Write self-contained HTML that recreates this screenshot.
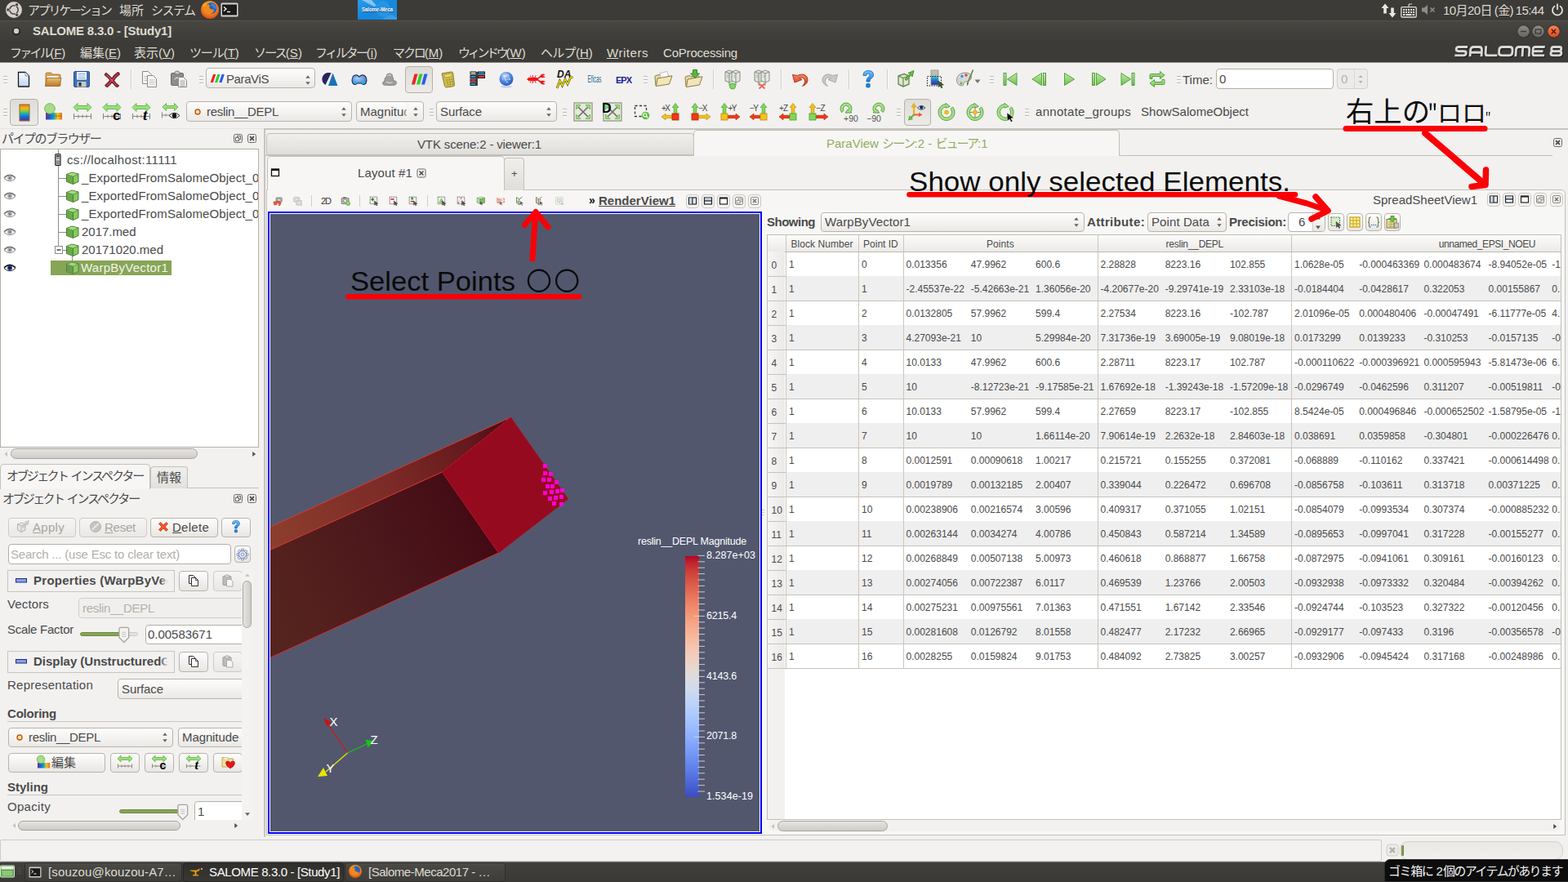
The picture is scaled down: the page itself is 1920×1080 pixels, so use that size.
<!DOCTYPE html>
<html lang="ja"><head><meta charset="utf-8"><title>SALOME 8.3.0 - [Study1]</title>
<style>
html,body{margin:0;padding:0;background:#f2f1f0;}
body{width:1920px;height:1080px;overflow:hidden;font-family:"Liberation Sans","Noto Sans CJK JP",sans-serif;}
#root{position:relative;width:1920px;height:1080px;overflow:hidden;background:#f2f1f0;}
#root div,#root span.t,#root svg.a{position:absolute;box-sizing:border-box;}
span.t{white-space:nowrap;}
span.t svg{display:inline-block;}
.btn{border:1px solid #b9b4ab;border-radius:4px;background:linear-gradient(#fdfdfc,#e8e6e3);}
.btnd{border:1px solid #cfcbc4;border-radius:4px;background:linear-gradient(#f6f5f4,#eae8e6);}
.combo{border:1px solid #b9b4ab;border-radius:4px;background:linear-gradient(#fdfdfc,#ebe9e6);}
.field{border:1px solid #b4afa6;border-radius:4px;background:#fff;}
.sbt{background:#f2f1f0;border-radius:7px;}
.sbh{border:1px solid #aaa59c;border-radius:7px;background:linear-gradient(#e6e4e1,#cfccc7);}
u{text-decoration:underline;text-underline-offset:1px;}

</style></head><body>
<div id="root">
<div style="left:0px;top:0px;width:1920px;height:25px;background:#3c3b37"></div>
<div style="left:0px;top:25px;width:1920px;height:1px;background:#54534e"></div>
<svg class="a" style="left:6.0px;top:1.0px" width="22" height="22" viewBox="0 0 22 22"><circle cx="11" cy="11" r="10" fill="#d6d2c9"/><circle cx="11" cy="11" r="5.2" fill="none" stroke="#4a4944" stroke-width="1.6"/><circle cx="3.8" cy="11" r="1.7" fill="#4a4944"/><circle cx="14.6" cy="4.8" r="1.7" fill="#4a4944"/><circle cx="14.6" cy="17.2" r="1.7" fill="#4a4944"/><path d="M11 11 L5.5 11 M11 11 L13.8 6.2 M11 11 L13.8 15.8" stroke="#d6d2c9" stroke-width="1.4"/></svg>
<span class="t" style="left:34px;top:2.5px;font-size:15px;line-height:20px;color:#dfdbd2;"><span style="letter-spacing:-2.29px">アプリケーション</span></span>
<span class="t" style="left:146px;top:2.5px;font-size:15px;line-height:20px;color:#dfdbd2;">場所</span>
<span class="t" style="left:185px;top:2.5px;font-size:15px;line-height:20px;color:#dfdbd2;"><span style="letter-spacing:-1.55px">システム</span></span>
<svg class="a" style="left:245.0px;top:0.0px" width="24" height="24" viewBox="0 0 24 24"><defs><radialGradient id="ffg" cx=".5" cy=".35" r=".7"><stop offset="0" stop-color="#ffd43a"/><stop offset=".5" stop-color="#f58a1c"/><stop offset="1" stop-color="#d9421c"/></radialGradient></defs><circle cx="12" cy="12" r="11" fill="url(#ffg)"/><circle cx="13.5" cy="10" r="7" fill="#2b62b8"/><path d="M7 6c2-1 4-1 5 1c-1 1-1 3 1 4c2 1 3 0 4 1c0 3-3 5-6 5c-4 0-7-3-6-7z" fill="#f08a1d"/><path d="M14 4c3 0 6 3 6 7l-3-1c-1-2-2-3-4-3z" fill="#3f86dc"/><path d="M3 8c0-2 2-5 4-5c-1 1-1 3 0 4z" fill="#f6a724"/></svg>
<svg class="a" style="left:270.0px;top:3.0px" width="22" height="18" viewBox="0 0 22 18"><rect x="0.5" y="0.5" width="21" height="17" rx="1.5" fill="#d8d6d0"/><rect x="2" y="2.5" width="18" height="13" fill="#1b1b1b"/><path d="M4 5.5l3 2.5l-3 2.5" stroke="#fff" stroke-width="1.3" fill="none"/><path d="M8 11.5h4" stroke="#fff" stroke-width="1.3"/></svg>
<svg class="a" style="left:438.0px;top:0.0px" width="48" height="24" viewBox="0 0 48 24"><defs><linearGradient id="smt" x1="0" y1="0" x2="1" y2="1"><stop offset="0" stop-color="#2a9be8"/><stop offset=".5" stop-color="#1487dc"/><stop offset="1" stop-color="#1b90e2"/></linearGradient></defs><rect width="48" height="24" fill="url(#smt)"/><path d="M5 0h12l6 7l-3 1z" fill="#a8d6f6" opacity=".75"/><ellipse cx="31" cy="11" rx="9" ry="10" fill="#3d9fe6" opacity=".45"/><path d="M30 24q6-6 12-6l6 4v2z" fill="#4fb0ee" opacity=".5"/><text x="24" y="14" font-family="Liberation Sans,sans-serif" font-size="6.500" font-weight="bold" text-anchor="middle" textLength="38" lengthAdjust="spacingAndGlyphs" fill="#20304a" opacity=".8" transform="translate(.5,.5)">Salome-Meca</text><text x="24" y="14" font-family="Liberation Sans,sans-serif" font-size="6.500" font-weight="bold" text-anchor="middle" textLength="38" lengthAdjust="spacingAndGlyphs" fill="#fff">Salome-Meca</text></svg>
<svg class="a" style="left:1691.0px;top:3.5px" width="20" height="18" viewBox="0 0 20 18"><path d="M5 0.5L9.5 6H6.8v6.5H3.2V6H0.5z" fill="#ebe7de"/><path d="M14 17.5L9.5 12h2.7V5.5h3.6V12h2.7z" fill="#ebe7de"/></svg>
<svg class="a" style="left:1715.0px;top:2.5px" width="20" height="19" viewBox="0 0 20 19"><path d="M10 5V3.2c0-1 .5-1.2 1.5-1.2H14" stroke="#e2ded5" stroke-width="1.1" fill="none"/><rect x="0.8" y="5.6" width="18.4" height="12.4" rx="1.2" fill="none" stroke="#e2ded5" stroke-width="1.3"/><g fill="#e2ded5"><rect x="3" y="8" width="2" height="2"/><rect x="6" y="8" width="2" height="2"/><rect x="9" y="8" width="2" height="2"/><rect x="12" y="8" width="2" height="2"/><rect x="15" y="8" width="2" height="2"/><rect x="3" y="11" width="2" height="2"/><rect x="6" y="11" width="2" height="2"/><rect x="9" y="11" width="2" height="2"/><rect x="12" y="11" width="2" height="2"/><rect x="15" y="11" width="2" height="2"/><rect x="3" y="14" width="2.5" height="2"/><rect x="6.5" y="14" width="7" height="2"/><rect x="14.5" y="14" width="2.5" height="2"/></g></svg>
<svg class="a" style="left:1740.0px;top:4.0px" width="20" height="16" viewBox="0 0 20 16"><path d="M1 5.5h3L8 2v12L4 10.5H1z" fill="#8e8c86"/><path d="M11.5 5.5l5 5M16.5 5.5l-5 5" stroke="#8e8c86" stroke-width="1.6"/></svg>
<span class="t" style="left:1767px;top:2.5px;font-size:15px;line-height:20px;color:#dfdbd2;letter-spacing:-0.55px;word-spacing:-1px">10月20日 (金) 15:44</span>
<svg class="a" style="left:1899.0px;top:4.0px" width="16" height="16" viewBox="0 0 16 16"><path d="M4.6 3.6A6 6 0 1 0 11.4 3.6" fill="none" stroke="#ebe7de" stroke-width="1.7" stroke-linecap="round"/><path d="M8 1v6.2" stroke="#ebe7de" stroke-width="1.7" stroke-linecap="round"/></svg>
<div style="left:0px;top:26px;width:1920px;height:26px;background:linear-gradient(#474641,#3c3b37)"></div>
<svg class="a" style="left:14.0px;top:32.0px" width="12" height="12" viewBox="0 0 12 12"><circle cx="6" cy="6.4" r="5" fill="#2b2a27"/><circle cx="6" cy="6" r="3.2" fill="#cfccc5"/></svg>
<span class="t" style="left:40px;top:28.0px;font-size:15px;line-height:20px;color:#dfdbd2;font-weight:bold;letter-spacing:-0.218px;">SALOME 8.3.0 - [Study1]</span>
<svg class="a" style="left:1856.5px;top:29.5px" width="17" height="17" viewBox="0 0 17 17"><defs><linearGradient id="wbg" x1="0" y1="0" x2="0" y2="1"><stop offset="0" stop-color="#8d8b83"/><stop offset="1" stop-color="#66645e"/></linearGradient><linearGradient id="wbc" x1="0" y1="0" x2="0" y2="1"><stop offset="0" stop-color="#f58457"/><stop offset="1" stop-color="#dd4a1c"/></linearGradient></defs><circle cx="8.5" cy="8.5" r="8" fill="#2e2d2a"/><circle cx="8.5" cy="8.5" r="7.2" fill="url(#wbg)"/><path d="M5 8.5h7" stroke="#3b3a36" stroke-width="1.4"/></svg>
<svg class="a" style="left:1874.5px;top:29.5px" width="17" height="17" viewBox="0 0 17 17"><circle cx="8.5" cy="8.5" r="8" fill="#2e2d2a"/><circle cx="8.5" cy="8.5" r="7.2" fill="url(#wbg)"/><rect x="5.2" y="6" width="6.6" height="5" fill="none" stroke="#3b3a36" stroke-width="1.3"/></svg>
<svg class="a" style="left:1893.5px;top:29.5px" width="17" height="17" viewBox="0 0 17 17"><circle cx="8.5" cy="8.5" r="8" fill="#2e2d2a"/><circle cx="8.5" cy="8.5" r="7.2" fill="url(#wbc)"/><path d="M5.8 5.8l5.4 5.4M11.2 5.8l-5.4 5.4" stroke="#4a1a0a" stroke-width="1.4"/></svg>
<div style="left:0px;top:52px;width:1920px;height:24px;background:#3c3b37"></div>
<span class="t" style="left:12px;top:55.0px;font-size:15px;line-height:20px;color:#dfdbd2;"><span style="letter-spacing:-2.72px">ファイル</span>(<u>F</u>)</span>
<span class="t" style="left:98px;top:55.0px;font-size:15px;line-height:20px;color:#dfdbd2;">編集(<u>E</u>)</span>
<span class="t" style="left:164px;top:55.0px;font-size:15px;line-height:20px;color:#dfdbd2;">表示(<u>V</u>)</span>
<span class="t" style="left:232px;top:55.0px;font-size:15px;line-height:20px;color:#dfdbd2;"><span style="letter-spacing:-1.13px">ツール</span>(<u>T</u>)</span>
<span class="t" style="left:311px;top:55.0px;font-size:15px;line-height:20px;color:#dfdbd2;"><span style="letter-spacing:-1.8px">ソース</span>(<u>S</u>)</span>
<span class="t" style="left:386px;top:55.0px;font-size:15px;line-height:20px;color:#dfdbd2;"><span style="letter-spacing:-2.4px">フィルター</span>(<u>i</u>)</span>
<span class="t" style="left:481px;top:55.0px;font-size:15px;line-height:20px;color:#dfdbd2;"><span style="letter-spacing:-2.1px">マクロ</span>(<u>M</u>)</span>
<span class="t" style="left:561px;top:55.0px;font-size:15px;line-height:20px;color:#dfdbd2;"><span style="letter-spacing:-3.3px">ウィンドウ</span>(<u>W</u>)</span>
<span class="t" style="left:662px;top:55.0px;font-size:15px;line-height:20px;color:#dfdbd2;"><span style="letter-spacing:-0.7px">ヘルプ</span>(<u>H</u>)</span>
<span class="t" style="left:743px;top:54.5px;font-size:15px;line-height:20px;color:#dfdbd2;letter-spacing:0.540px;"><u>W</u>riters</span>
<span class="t" style="left:812px;top:54.5px;font-size:15px;line-height:20px;color:#dfdbd2;letter-spacing:-0.198px;">CoProcessing</span>
<svg class="a" style="left:1776.5px;top:54.0px" width="140" height="18" viewBox="0 0 140 18"><g fill="none" stroke="#1e1d1b" stroke-width="2.9" stroke-linejoin="round" stroke-linecap="butt" transform="translate(5.2,3.4) scale(.962,1) skewX(-4)">
<path d="M16.5 1.3H5.5Q2.3 1.3 2.3 3.9Q2.3 6.5 5.5 6.5H12Q15.2 6.5 15.2 9.1Q15.2 11.7 12 11.7H1"/>
<path d="M20.5 13V5.5Q20.5 1.3 24.5 1.3H31Q35 1.3 35 5.5V13M20.5 8H35"/>
<path d="M40 0V9Q40 11.7 43 11.7H55"/>
<path d="M61 1.3H70Q74 1.3 74 5V8Q74 11.7 70 11.7H61Q57 11.7 57 8V5Q57 1.3 61 1.3Z"/>
<path d="M78.5 13V5Q78.5 1.3 82 1.3H92Q95.5 1.3 95.5 5V13M87 1.3V13"/>
<path d="M115 1.3H103Q100 1.3 100 4V9Q100 11.7 103 11.7H115M100 6.5H113"/>
<path d="M126 1.3H133.5Q136 1.3 136 3.9Q136 6.5 133.5 6.5H126Q123.5 6.5 123.5 3.9Q123.5 1.3 126 1.3ZM126 6.5Q123 6.5 123 9.1Q123 11.7 126 11.7H133.5Q136.5 11.7 136.5 9.1Q136.5 6.5 133.5 6.5"/>
</g><g fill="none" stroke="#d9d9d9" stroke-width="2.9" stroke-linejoin="round" stroke-linecap="butt" transform="translate(4.2,2.2) scale(.962,1) skewX(-4)">
<path d="M16.5 1.3H5.5Q2.3 1.3 2.3 3.9Q2.3 6.5 5.5 6.5H12Q15.2 6.5 15.2 9.1Q15.2 11.7 12 11.7H1"/>
<path d="M20.5 13V5.5Q20.5 1.3 24.5 1.3H31Q35 1.3 35 5.5V13M20.5 8H35"/>
<path d="M40 0V9Q40 11.7 43 11.7H55"/>
<path d="M61 1.3H70Q74 1.3 74 5V8Q74 11.7 70 11.7H61Q57 11.7 57 8V5Q57 1.3 61 1.3Z"/>
<path d="M78.5 13V5Q78.5 1.3 82 1.3H92Q95.5 1.3 95.5 5V13M87 1.3V13"/>
<path d="M115 1.3H103Q100 1.3 100 4V9Q100 11.7 103 11.7H115M100 6.5H113"/>
<path d="M126 1.3H133.5Q136 1.3 136 3.9Q136 6.5 133.5 6.5H126Q123.5 6.5 123.5 3.9Q123.5 1.3 126 1.3ZM126 6.5Q123 6.5 123 9.1Q123 11.7 126 11.7H133.5Q136.5 11.7 136.5 9.1Q136.5 6.5 133.5 6.5"/>
</g></svg>
<div style="left:0px;top:76px;width:1920px;height:1px;background:#8d8c88"></div>
<div style="left:4px;top:93px;width:5px;height:1px;background:#bdb9b2"></div>
<div style="left:4px;top:94px;width:5px;height:1px;background:#fbfbfa"></div>
<div style="left:4px;top:97px;width:5px;height:1px;background:#bdb9b2"></div>
<div style="left:4px;top:98px;width:5px;height:1px;background:#fbfbfa"></div>
<div style="left:4px;top:101px;width:5px;height:1px;background:#bdb9b2"></div>
<div style="left:4px;top:102px;width:5px;height:1px;background:#fbfbfa"></div>
<svg class="a" style="left:17.0px;top:85.0px" width="24" height="24" viewBox="0 0 24 24"><defs><linearGradient id="ndg" x1="0" y1="0" x2="0" y2="1"><stop offset="0" stop-color="#fff"/><stop offset="1" stop-color="#b9d3f6"/></linearGradient></defs><path d="M5.5 3.5h8.5l4.5 4.5v13h-13z" fill="url(#ndg)" stroke="#1a1a1a" stroke-width="1.3" stroke-linejoin="round"/><path d="M14 3.5v4.5h4.5" fill="#dfeafc" stroke="#6f86b5" stroke-width=".8"/></svg>
<svg class="a" style="left:53.0px;top:85.0px" width="24" height="24" viewBox="0 0 24 24"><defs><linearGradient id="fog" x1="0" y1="0" x2="0" y2="1"><stop offset="0" stop-color="#e9bd72"/><stop offset="1" stop-color="#b87a2a"/></linearGradient></defs><path d="M3 20V5.5q0-1.500 1.500-1.500h5l1.500 2h8.500q1.500 0 1.500 1.500V20z" fill="#d9a255" stroke="#a36a22" stroke-width=".8"/><path d="M4.500 8h14v11h-14z" fill="#f6f1e6"/><path d="M2.500 20.500l2-10h17.500l-2.300 10z" fill="url(#fog)" stroke="#a0661d" stroke-width=".8"/></svg>
<svg class="a" style="left:88.0px;top:85.0px" width="24" height="24" viewBox="0 0 24 24"><rect x="2.500" y="2.500" width="19" height="19" rx="1.500" fill="#3f6fb6" stroke="#2b4f88" stroke-width="1"/><rect x="6" y="3" width="12" height="9.500" fill="#fff"/><path d="M7.500 5.500h9M7.500 8h9M7.500 10.500h9" stroke="#6f9be0" stroke-width="1"/><rect x="6.500" y="15" width="11" height="6.500" fill="#c9c9c4"/><rect x="8.500" y="16" width="3" height="4.500" fill="#2a2a2a"/></svg>
<svg class="a" style="left:125.0px;top:85.0px" width="24" height="24" viewBox="0 0 24 24"><path d="M5 4.5C8 7 10.5 9.5 12 11.2C14 8 16.5 5.5 19.5 3.5C20.8 4.2 21.3 5 21.3 6C18.5 8 16 10.8 14.3 13.5C16 16 18 18.3 20.5 20C19.8 21 18.8 21.5 17.5 21.3C15.3 19.3 13.6 17.3 12.2 15.500C10.600 17.800 8.800 19.800 6.500 21.500C5.300 21.300 4.300 20.600 3.800 19.500C6.300 17.600 8.200 15.500 9.900 13.200C8.300 11 6.200 8.800 3.300 6.800C3.500 5.700 4 4.900 5 4.500Z" fill="#c23a4f" stroke="#5e1422" stroke-width="1.1" stroke-linejoin="round"/><path d="M5.500 6.500C8.500 9 11 12 12.500 14" stroke="#e08090" stroke-width="1" fill="none" opacity=".7"/></svg>
<div style="left:160px;top:85.0px;width:1px;height:24px;background:#d0cdc7"></div>
<div style="left:161px;top:85.0px;width:1px;height:24px;background:#fbfbfa"></div>
<svg class="a" style="left:171.0px;top:85.0px" width="24" height="24" viewBox="0 0 24 24"><path d="M3.500 2.500h7l4 4v11h-11z" fill="#f6f6f4" stroke="#8a8a86" stroke-width="1"/><path d="M5.500 8.500h7M5.500 11h7M5.500 13.500h7" stroke="#b4b4b0" stroke-width=".8"/><path d="M9.500 7.500h7l4 4v10h-11z" fill="#f6f6f4" stroke="#8a8a86" stroke-width="1"/><path d="M11.500 13h7M11.500 15.500h7M11.500 18h7" stroke="#b4b4b0" stroke-width=".8"/></svg>
<svg class="a" style="left:207.0px;top:85.0px" width="24" height="24" viewBox="0 0 24 24"><rect x="2.500" y="4.500" width="15" height="15" rx="1.500" fill="#8d8d89" stroke="#6a6a66"/><path d="M7 4.500q0-2.500 3-2.500t3 2.500v1.500h-6z" fill="#c9c9c5" stroke="#6a6a66" stroke-width=".8"/><path d="M6 12q3-5 7-2l1-1.500l1 5l-5-.5l1.500-1.300q-2.500-1.300-4.500 1.500z" fill="#d5d5d1" stroke="#777" stroke-width=".5"/><path d="M11.500 9.500h6l4 4v8h-10z" fill="#f4f4f2" stroke="#8a8a86" stroke-width="1"/><path d="M13.500 14h6M13.500 16h6M13.500 18h6M13.500 20h6" stroke="#9a9a96" stroke-width=".9"/></svg>
<div style="left:244px;top:93px;width:5px;height:1px;background:#bdb9b2"></div>
<div style="left:244px;top:94px;width:5px;height:1px;background:#fbfbfa"></div>
<div style="left:244px;top:97px;width:5px;height:1px;background:#bdb9b2"></div>
<div style="left:244px;top:98px;width:5px;height:1px;background:#fbfbfa"></div>
<div style="left:244px;top:101px;width:5px;height:1px;background:#bdb9b2"></div>
<div style="left:244px;top:102px;width:5px;height:1px;background:#fbfbfa"></div>
<div class="combo" style="left:252px;top:83px;width:134px;height:25px;"></div>
<svg class="a" style="left:257.0px;top:89.5px" width="18" height="12" viewBox="0 0 18 12"><path d="M4 1h3.300L4 11H.7z" fill="#ee2222"/><path d="M9.3 1h3.300L9.300 11H6z" fill="#2fcf2a"/><path d="M14.600 1h3.300L14.600 11h-3.300z" fill="#2a5cf0"/></svg>
<span class="t" style="left:277px;top:86.5px;font-size:15px;line-height:20px;color:#4a4a4a;letter-spacing:-0.394px;">ParaViS</span>
<svg class="a" style="left:371.5px;top:89.5px" width="10" height="16" viewBox="0 0 10 16"><path d="M5 2.200L7.700 5.800H2.300z" fill="#67655f"/><path d="M5 13.800L7.700 10.200H2.300z" fill="#67655f"/></svg>
<svg class="a" style="left:392.0px;top:85.0px" width="24" height="24" viewBox="0 0 24 24"><path d="M11 4A8 8 0 0 0 6.500 19L13.500 4.300Q12.300 4 11 4z" fill="#27235e"/><path d="M15.500 4.500L21.500 20H10z" fill="#1d71b8"/></svg>
<svg class="a" style="left:428.0px;top:85.0px" width="24" height="24" viewBox="0 0 24 24"><defs><radialGradient id="geg" cx=".4" cy=".35" r=".7"><stop offset="0" stop-color="#a8d0ff"/><stop offset="1" stop-color="#3f78c9"/></radialGradient></defs><path d="M4.500 8.500q3.500-3.500 7.500.5q4-4 7.500-.5q2.500 4 .5 8.500q-3 3-5.500 0h-5q-2.500 3-5.500 0q-2-4.500.5-8.500z" fill="url(#geg)" stroke="#1d2f4a" stroke-width="1.1"/><ellipse cx="7" cy="16" rx="2.200" ry="1.800" fill="#2fb3e8"/><ellipse cx="17" cy="16" rx="2.200" ry="1.800" fill="#2fb3e8"/></svg>
<svg class="a" style="left:465.0px;top:85.0px" width="24" height="24" viewBox="0 0 24 24"><path d="M7 14q-3.500.5-3.500 3t5 2.500h7q5 0 5-3t-4-3q1-3-1-4.500q.5-4-3.500-4t-4 4q-2.500 1-2 5z" fill="#9e9e9c" stroke="#7b7b79" stroke-width=".8"/><path d="M9 8q2-2.500 5-.5M7.500 15q3 2 8 1" stroke="#d8d8d6" stroke-width="1.200" fill="none"/></svg>
<div style="left:496px;top:81px;width:34px;height:33px;border:1px solid #b6b1a8;border-radius:4px;background:linear-gradient(#dedcd8,#ecebe8)"></div>
<svg class="a" style="left:501.0px;top:85.0px" width="24" height="24" viewBox="0 0 24 24"><path d="M6.500 5.500h4L7 18.500H3z" fill="#ee2222"/><path d="M12.500 5.500h4L13 18.500H9z" fill="#2fcf2a"/><path d="M18.500 5.500h4L19 18.500h-4z" fill="#2a5cf0"/></svg>
<svg class="a" style="left:537.0px;top:85.0px" width="24" height="24" viewBox="0 0 24 24"><path d="M4 5l11.500-2q2-.3 2.200 1.700l1.800 14q.2 1.800-1.500 2l-8 1.300q-1.800.3-2.500-1.500z" fill="#cdbb4e" stroke="#8e7f24" stroke-width="1"/><path d="M6.500 6.500l9.500-1.600l.6 3.600l-8.600 1.600z" fill="#e6d97c" stroke="#9a8a2c" stroke-width=".6"/><g fill="#a5952f"><circle cx="10.500" cy="13" r="1"/><circle cx="13.500" cy="12.500" r="1"/><circle cx="16.500" cy="12" r="1"/><circle cx="11" cy="16" r="1"/><circle cx="14" cy="15.500" r="1"/><circle cx="17" cy="15" r="1"/><circle cx="11.500" cy="19" r="1"/><circle cx="14.500" cy="18.500" r="1"/><circle cx="17.500" cy="18" r="1"/></g></svg>
<svg class="a" style="left:573.0px;top:85.0px" width="24" height="24" viewBox="0 0 24 24"><g stroke="#1c1c1c" stroke-width="1"><rect x="3" y="3" width="7" height="3" fill="#d9d9d9"/><rect x="12.500" y="3" width="8" height="3" fill="#2f8fe0"/><rect x="3" y="7.500" width="7" height="3" fill="#2f8fe0"/><rect x="12.500" y="7.500" width="8" height="3" fill="#e8333c"/><rect x="3" y="12" width="7" height="3" fill="#e8333c"/><rect x="3" y="16.500" width="7" height="3" fill="#2f8fe0"/></g><path d="M11 3v17" stroke="#1c1c1c" stroke-width="1.600"/></svg>
<svg class="a" style="left:608.0px;top:85.0px" width="24" height="24" viewBox="0 0 24 24"><defs><radialGradient id="glg" cx=".4" cy=".3" r=".75"><stop offset="0" stop-color="#cfe3ff"/><stop offset=".45" stop-color="#5b93e6"/><stop offset="1" stop-color="#1f4fb5"/></radialGradient></defs><ellipse cx="12" cy="21" rx="7" ry="1.800" fill="#b9cdee" opacity=".8"/><circle cx="12" cy="11.500" r="8.500" fill="url(#glg)"/><g fill="#fff" opacity=".9"><circle cx="9" cy="8" r=".8"/><circle cx="14" cy="7" r=".7"/><circle cx="16" cy="12" r=".8"/><circle cx="11" cy="13" r=".7"/><circle cx="13" cy="16" r=".7"/><circle cx="7.500" cy="12" r=".6"/></g><path d="M9 8l5-1l2 5l-5 1zM11 13l2 3" stroke="#e8f0ff" stroke-width=".5" fill="none" opacity=".8"/></svg>
<svg class="a" style="left:644.0px;top:85.0px" width="26" height="24" viewBox="0 0 26 24"><g fill="#f01414"><ellipse cx="9" cy="12" rx="6.500" ry="2.600"/><path d="M1 12l3-2.500v5z"/><path d="M14 10.500q3-1.500 5-4.500q3-1 4.500.5q-2 .5-3 1.800q2-.3 3.500.7q-3 2-6 .8q-1.500 1-3 1.700z"/><path d="M14 13.500q3 1.500 5 4.500q3 1 4.500-.5q-2-.5-3-1.800q2 .3 3.500-.7q-3-2-6-.8q-1.500-1-3-1.700z"/><path d="M5 9.500l1-2M8 9.300l.5-2.300M11 9.500l1-2M5 14.500l1 2M8 14.700l.5 2.300M11 14.500l1 2" stroke="#f01414" stroke-width="1"/></g></svg>
<svg class="a" style="left:680.0px;top:84.0px" width="24" height="26" viewBox="0 0 24 26"><text x="2" y="11" font-family="Liberation Sans,sans-serif" font-size="12" font-weight="bold" font-style="italic" fill="#111">DA</text><path d="M2 24l3.500-9l3 6l3.500-8l3 6l4-9l2.500 1.500" fill="none" stroke="#3a3a10" stroke-width="2.600"/><path d="M2 24l3.500-9l3 6l3.500-8l3 6l4-9l2.500 1.500" fill="none" stroke="#f2e200" stroke-width="1.500"/></svg>
<svg class="a" style="left:718.0px;top:90.0px" width="20" height="14" viewBox="0 0 20 14"><text x="10" y="11" font-family="Liberation Sans,sans-serif" font-size="10" text-anchor="middle" textLength="17" lengthAdjust="spacingAndGlyphs" fill="#1d6f96" transform="scale(1,1.200) translate(0,-1.800)">Eficas</text></svg>
<svg class="a" style="left:752.0px;top:90.0px" width="24" height="14" viewBox="0 0 24 14"><text x="12" y="11.500" font-family="Liberation Sans,sans-serif" font-size="11" font-weight="bold" text-anchor="middle" textLength="20" fill="#1a1a9a">EPX</text></svg>
<div style="left:788px;top:93px;width:5px;height:1px;background:#bdb9b2"></div>
<div style="left:788px;top:94px;width:5px;height:1px;background:#fbfbfa"></div>
<div style="left:788px;top:97px;width:5px;height:1px;background:#bdb9b2"></div>
<div style="left:788px;top:98px;width:5px;height:1px;background:#fbfbfa"></div>
<div style="left:788px;top:101px;width:5px;height:1px;background:#bdb9b2"></div>
<div style="left:788px;top:102px;width:5px;height:1px;background:#fbfbfa"></div>
<svg class="a" style="left:800.0px;top:85.0px" width="26" height="24" viewBox="0 0 26 24"><path d="M3 20l-1-11q0-1.200 1.200-1.500l4.500-1l1.500 1.500l8-1.500q1.300-.2 1.500 1l.3 2.500" fill="#e8d9a8" stroke="#8a7a44" stroke-width="1"/><path d="M8 4.500l9-2l2 7l-10 2z" fill="#fbfbf8" stroke="#aaa" stroke-width=".7"/><path d="M3.500 20.500l1.500-9.500l18-3.200l-3.500 10.200z" fill="#f2e6b8" stroke="#8a7a44" stroke-width="1"/></svg>
<svg class="a" style="left:837.0px;top:84.0px" width="26" height="26" viewBox="0 0 26 26"><path d="M3 22l-1-11q0-1.200 1.200-1.500l4.500-1l1.500 1.500l8-1.500q1.300-.2 1.500 1l.3 2.500" fill="#e8d9a8" stroke="#8a7a44" stroke-width="1"/><path d="M3.500 22.500l1.500-9.500l18-3.200l-3.500 10.200z" fill="#f2e6b8" stroke="#8a7a44" stroke-width="1"/><path d="M11.500 1.500h5v4.500h3l-5.500 5.500l-5.500-5.500h3z" fill="#59b83c" stroke="#2f7a1c" stroke-width=".9"/></svg>
<div style="left:873px;top:85.0px;width:1px;height:24px;background:#d0cdc7"></div>
<div style="left:874px;top:85.0px;width:1px;height:24px;background:#fbfbfa"></div>
<svg class="a" style="left:885.0px;top:84.0px" width="24" height="26" viewBox="0 0 24 26"><g stroke="#7d8578" stroke-width=".9"><path d="M3 4l5-2l5 2v11l-5 2l-5-2z" fill="#dfe3da"/><path d="M3 4l5 2l5-2M8 6v11" fill="none"/><path d="M11 4l5-2l5 2v11l-5 2l-5-2z" fill="#e6e9e2"/><path d="M11 4l5 2l5-2M16 6v11" fill="none"/></g><path d="M5 8l2 .8M5 10l2 .8M13.500 8l2 .8M13.500 10l2 .8" stroke="#9aa394" stroke-width=".8"/><path d="M8 17v3h8v-3M12 20v1" stroke="#8a9284" stroke-width="1.200" fill="none"/><circle cx="12" cy="21.500" r="3.600" fill="#7ed957" stroke="#4e9a30" stroke-width=".8"/></svg>
<svg class="a" style="left:921.0px;top:84.0px" width="24" height="26" viewBox="0 0 24 26"><g stroke="#7d8578" stroke-width=".9"><path d="M3 4l5-2l5 2v11l-5 2l-5-2z" fill="#dfe3da"/><path d="M3 4l5 2l5-2M8 6v11" fill="none"/><path d="M11 4l5-2l5 2v11l-5 2l-5-2z" fill="#e6e9e2"/><path d="M11 4l5 2l5-2M16 6v11" fill="none"/></g><path d="M5 8l2 .8M5 10l2 .8M13.500 8l2 .8M13.500 10l2 .8" stroke="#9aa394" stroke-width=".8"/><path d="M8 17v3h8v-3M12 20v1" stroke="#8a9284" stroke-width="1.200" fill="none"/><path d="M8.500 18.500l7 6M15.500 18.500l-7 6" stroke="#e86a5a" stroke-width="2"/></svg>
<div style="left:956px;top:85.0px;width:1px;height:24px;background:#d0cdc7"></div>
<div style="left:957px;top:85.0px;width:1px;height:24px;background:#fbfbfa"></div>
<svg class="a" style="left:968.0px;top:85.0px" width="24" height="24" viewBox="0 0 24 24"><defs><linearGradient id="ung" x1="0" y1="0" x2="0" y2="1"><stop offset="0" stop-color="#f7875a"/><stop offset="1" stop-color="#d8361c"/></linearGradient></defs><path d="M2.500 6.500l2.500 9.500l9-3.500l-3.500-2q4-2 6.500 1.500q2 4-2.500 8.500q8.500-3.500 6-10.500q-3.500-6.500-12-2.500z" fill="url(#ung)" stroke="#a82a14" stroke-width=".9" stroke-linejoin="round"/></svg>
<svg class="a" style="left:1004.0px;top:85.0px" width="24" height="24" viewBox="0 0 24 24"><path d="M21.500 6.500l-2.500 9.500l-9-3.500l3.500-2q-4-2-6.500 1.500q-2 4 2.500 8.500q-8.500-3.500-6-10.500q3.500-6.500 12-2.500z" fill="#c9c9c7" stroke="#a3a3a0" stroke-width=".9" stroke-linejoin="round"/></svg>
<div style="left:1039px;top:85.0px;width:1px;height:24px;background:#d0cdc7"></div>
<div style="left:1040px;top:85.0px;width:1px;height:24px;background:#fbfbfa"></div>
<svg class="a" style="left:1051.0px;top:84.0px" width="24" height="26" viewBox="0 0 24 26"><defs><linearGradient id="hlg" x1="0" y1="0" x2="0" y2="1"><stop offset="0" stop-color="#7cc4ff"/><stop offset="1" stop-color="#0f7fe0"/></linearGradient></defs><path d="M6 8.500q0-6 6.200-6q6.300 0 6.300 5.300q0 3-3 4.700q-1.500 1-1.500 3v.5h-4v-1q0-3 2.500-4.700q1.500-1 1.500-2.500q0-1.800-2-1.800q-2.200 0-2.200 2.500z" fill="url(#hlg)" stroke="#0a5fb0" stroke-width=".8"/><rect x="9.800" y="18.500" width="4.400" height="4.400" rx=".8" fill="#1588e8" stroke="#0a5fb0" stroke-width=".8"/></svg>
<div style="left:1086px;top:85.0px;width:1px;height:24px;background:#d0cdc7"></div>
<div style="left:1087px;top:85.0px;width:1px;height:24px;background:#fbfbfa"></div>
<svg class="a" style="left:1096.0px;top:84.0px" width="26" height="26" viewBox="0 0 26 26"><path d="M4 9l7-2.500l6 2.500v10l-7 3l-6-3z" fill="#dfe6d6" stroke="#6c8c4c" stroke-width="1.400" stroke-linejoin="round"/><path d="M4 9l6 2.500l7-2.500M10 11.500v10.500" fill="none" stroke="#6c8c4c" stroke-width="1.200"/><path d="M12 13l7-7l-3-.5l7-3l-2 7.500l-1-2.500l-6 7z" fill="#6cc04a" stroke="#3f8a26" stroke-width=".9"/></svg>
<svg class="a" style="left:1132.0px;top:84.0px" width="26" height="26" viewBox="0 0 26 26"><defs><linearGradient id="scg" x1="0" y1="0" x2="0" y2="1"><stop offset="0" stop-color="#c9c3b5"/><stop offset=".35" stop-color="#bdb7a8"/><stop offset=".45" stop-color="#35c4c9"/><stop offset=".7" stop-color="#1d6fd0"/><stop offset="1" stop-color="#3a2aa0"/></linearGradient></defs><rect x="8" y="2" width="9" height="18" fill="url(#scg)" stroke="#888375" stroke-width=".7"/><rect x="3.500" y="9.500" width="17" height="11.500" fill="none" stroke="#222" stroke-width="1.200" stroke-dasharray="1.500 1.500"/><path d="M17 15l6.500 5l-3 .3l1.500 3l-1.300.6l-1.500-3l-2 1.800z" fill="#3d5a2a" stroke="#1d2f12" stroke-width=".5"/></svg>
<svg class="a" style="left:1169.0px;top:84.0px" width="26" height="26" viewBox="0 0 26 26"><path d="M12 5q-9 1-9.500 9q0 6 6 7q3 0 2.500-2.500q-.5-2.500 2.500-2.500q6-.5 7-5q.5-6-8.500-6z" fill="#d9d9d6" stroke="#8f8f8b" stroke-width="1"/><circle cx="9" cy="9.500" r="1.700" fill="#3a8fe0"/><circle cx="14" cy="8" r="1.700" fill="#e04040"/><circle cx="6.500" cy="14" r="1.700" fill="#e8e8e8" stroke="#999" stroke-width=".5"/><circle cx="8" cy="18" r="1.500" fill="#55b840"/><path d="M22.500 1.500l-7 17" stroke="#5f8a3c" stroke-width="1.600"/><path d="M15.800 17.500l-1.300 4l2.500-3z" fill="#333"/></svg>
<svg class="a" style="left:1193.0px;top:97.0px" width="8" height="6" viewBox="0 0 8 6"><path d="M.5 .5h7l-3.500 4.500z" fill="#777570"/></svg>
<div style="left:1212px;top:93px;width:5px;height:1px;background:#bdb9b2"></div>
<div style="left:1212px;top:94px;width:5px;height:1px;background:#fbfbfa"></div>
<div style="left:1212px;top:97px;width:5px;height:1px;background:#bdb9b2"></div>
<div style="left:1212px;top:98px;width:5px;height:1px;background:#fbfbfa"></div>
<div style="left:1212px;top:101px;width:5px;height:1px;background:#bdb9b2"></div>
<div style="left:1212px;top:102px;width:5px;height:1px;background:#fbfbfa"></div>
<svg class="a" style="left:1225.0px;top:85.0px" width="24" height="24" viewBox="0 0 24 24"><defs><linearGradient id="vcg" x1="0" y1="0" x2="0" y2="1"><stop offset="0" stop-color="#c0eca8"/><stop offset="1" stop-color="#6cc04c"/></linearGradient></defs><rect x="4" y="4.500" width="3" height="15" fill="url(#vcg)" stroke="#4a9a2e" stroke-width=".9"/><path d="M20 4.500v15l-11.500-7.500z" fill="url(#vcg)" stroke="#4a9a2e" stroke-width=".9" stroke-linejoin="round"/></svg>
<svg class="a" style="left:1261.0px;top:85.0px" width="24" height="24" viewBox="0 0 24 24"><rect x="16.500" y="4.500" width="3" height="15" fill="url(#vcg)" stroke="#4a9a2e" stroke-width=".9"/><path d="M14.500 4.500v15l-11.500-7.500z" fill="url(#vcg)" stroke="#4a9a2e" stroke-width=".9" stroke-linejoin="round"/></svg>
<svg class="a" style="left:1297.0px;top:85.0px" width="24" height="24" viewBox="0 0 24 24"><path d="M6.500 4.500v15l12-7.500z" fill="url(#vcg)" stroke="#4a9a2e" stroke-width=".9" stroke-linejoin="round"/></svg>
<svg class="a" style="left:1333.0px;top:85.0px" width="24" height="24" viewBox="0 0 24 24"><rect x="4.500" y="4.500" width="3" height="15" fill="url(#vcg)" stroke="#4a9a2e" stroke-width=".9"/><path d="M9.500 4.500v15l11.500-7.500z" fill="url(#vcg)" stroke="#4a9a2e" stroke-width=".9" stroke-linejoin="round"/></svg>
<svg class="a" style="left:1369.0px;top:85.0px" width="24" height="24" viewBox="0 0 24 24"><rect x="17" y="4.500" width="3" height="15" fill="url(#vcg)" stroke="#4a9a2e" stroke-width=".9"/><path d="M4 4.500v15l11.500-7.500z" fill="url(#vcg)" stroke="#4a9a2e" stroke-width=".9" stroke-linejoin="round"/></svg>
<svg class="a" style="left:1405.0px;top:85.0px" width="24" height="24" viewBox="0 0 24 24"><path d="M3 11.500v-4.500q0-1.500 1.500-1.500h11v-3l5.500 4.500l-5.500 4.500v-3h-9.500v3z" fill="url(#vcg)" stroke="#4a9a2e" stroke-width=".9" stroke-linejoin="round"/><path d="M21 12.500v4.500q0 1.500-1.500 1.500h-11v3l-5.500-4.500l5.500-4.500v3h9.500v-3z" fill="url(#vcg)" stroke="#4a9a2e" stroke-width=".9" stroke-linejoin="round"/></svg>
<div style="left:1441px;top:93px;width:5px;height:1px;background:#bdb9b2"></div>
<div style="left:1441px;top:94px;width:5px;height:1px;background:#fbfbfa"></div>
<div style="left:1441px;top:97px;width:5px;height:1px;background:#bdb9b2"></div>
<div style="left:1441px;top:98px;width:5px;height:1px;background:#fbfbfa"></div>
<div style="left:1441px;top:101px;width:5px;height:1px;background:#bdb9b2"></div>
<div style="left:1441px;top:102px;width:5px;height:1px;background:#fbfbfa"></div>
<span class="t" style="left:1448px;top:87.5px;font-size:15px;line-height:20px;color:#4a4a4a;letter-spacing:0.011px;">Time:</span>
<div class="field" style="left:1489px;top:84px;width:144px;height:25px;"></div>
<span class="t" style="left:1493px;top:87.0px;font-size:15px;line-height:20px;color:#4a4a4a;">0</span>
<div style="left:1637px;top:84px;width:38px;height:25px;border:1px solid #d4d0ca;border-radius:4px;background:#edebe9"></div>
<div style="left:1658px;top:85px;width:1px;height:23px;background:#dcd9d4"></div>
<span class="t" style="left:1642px;top:87.0px;font-size:15px;line-height:20px;color:#b5b1aa;">0</span>
<svg class="a" style="left:1662.0px;top:90.0px" width="8" height="14" viewBox="0 0 8 14"><path d="M4 2l2.500 3h-5z" fill="#b5b1aa"/><path d="M4 12l2.500-3h-5z" fill="#b5b1aa"/></svg>
<div style="left:4px;top:133px;width:5px;height:1px;background:#bdb9b2"></div>
<div style="left:4px;top:134px;width:5px;height:1px;background:#fbfbfa"></div>
<div style="left:4px;top:137px;width:5px;height:1px;background:#bdb9b2"></div>
<div style="left:4px;top:138px;width:5px;height:1px;background:#fbfbfa"></div>
<div style="left:4px;top:141px;width:5px;height:1px;background:#bdb9b2"></div>
<div style="left:4px;top:142px;width:5px;height:1px;background:#fbfbfa"></div>
<div style="left:12px;top:121px;width:35px;height:33px;border:1px solid #b6b1a8;border-radius:4px;background:linear-gradient(#dedcd8,#ecebe8)"></div>
<svg class="a" style="left:22.5px;top:126.5px" width="14" height="22" viewBox="0 0 14 22"><defs><linearGradient id="cbg" x1="0" y1="0" x2="0" y2="1"><stop offset="0" stop-color="#f06a10"/><stop offset=".22" stop-color="#f4b81c"/><stop offset=".42" stop-color="#7cc83c"/><stop offset=".58" stop-color="#10a8c0"/><stop offset=".78" stop-color="#1860d8"/><stop offset="1" stop-color="#6a2a9c"/></linearGradient><linearGradient id="cbh" x1="0" y1="0" x2="1" y2="0"><stop offset="0" stop-color="#6a2a9c"/><stop offset=".25" stop-color="#1860d8"/><stop offset=".5" stop-color="#10a8c0"/><stop offset=".72" stop-color="#f4c81c"/><stop offset="1" stop-color="#f06a10"/></linearGradient></defs><rect x="1" y="1" width="12" height="20" fill="url(#cbg)" stroke="#8a6a3a" stroke-width="1"/></svg>
<svg class="a" style="left:53.0px;top:125.0px" width="24" height="24" viewBox="0 0 24 24"><rect x="3" y="13" width="20" height="8.500" fill="url(#cbh)"/><path d="M3 17h20M9.500 15.500v3M16 15.500v3" stroke="#6a5a4a" stroke-width=".8" opacity=".7"/><circle cx="8" cy="8" r="6.300" fill="#a4dc8a" stroke="#6cb04c" stroke-width=".9"/></svg>
<svg class="a" style="left:89.0px;top:125.0px" width="24" height="24" viewBox="0 0 24 24"><path d="M1 6.500l5-5v3h12v-3l5 5l-5 5v-3h-12v3z" fill="#9adf7c" stroke="#62b344" stroke-width=".9" stroke-linejoin="round"/><path d="M1.500 17.500h21M1.500 14v7M22.500 14v7M7 15.500v4M12 15.500v4M17 15.500v4" stroke="#8a8a78" stroke-width="1.100" fill="none"/></svg>
<svg class="a" style="left:125.0px;top:125.0px" width="24" height="24" viewBox="0 0 24 24"><path d="M1 6.500l5-5v3h12v-3l5 5l-5 5v-3h-12v3z" fill="#9adf7c" stroke="#62b344" stroke-width=".9" stroke-linejoin="round"/><path d="M1.500 17.500h21M1.500 14v7M22.500 14v7M7 15.500v4M12 15.500v4M17 15.500v4" stroke="#8a8a78" stroke-width="1.100" fill="none"/><text x="13" y="22" font-family="Liberation Sans,sans-serif" font-size="17" font-weight="bold" fill="#000">c</text></svg>
<svg class="a" style="left:161.0px;top:125.0px" width="24" height="24" viewBox="0 0 24 24"><path d="M1 6.500l5-5v3h12v-3l5 5l-5 5v-3h-12v3z" fill="#9adf7c" stroke="#62b344" stroke-width=".9" stroke-linejoin="round"/><path d="M1.500 17.500h21M1.500 14v7M22.500 14v7M7 15.500v4M12 15.500v4M17 15.500v4" stroke="#8a8a78" stroke-width="1.100" fill="none"/><text x="14" y="22" font-family="Liberation Serif,serif" font-size="19" font-weight="bold" font-style="italic" fill="#000">t</text></svg>
<svg class="a" style="left:197.0px;top:125.0px" width="24" height="24" viewBox="0 0 24 24"><path d="M2 6l4.500-4.500v3h10v-3l4.500 4.500l-4.500 4.500v-3h-10v3z" fill="#9adf7c" stroke="#62b344" stroke-width=".9" stroke-linejoin="round"/><path d="M1.500 16h9M1.500 12.500v7M6 14.500v3" stroke="#8a8a78" stroke-width="1.100" fill="none"/><path d="M10 16.500q6.500 -6.500 13 0q-6.500 6.500 -13 0z" fill="#fff" stroke="#222" stroke-width="1"/><circle cx="16.500" cy="16.500" r="2.800" fill="#111"/></svg>
<div class="combo" style="left:228px;top:124px;width:203px;height:25px;"></div>
<svg class="a" style="left:237.0px;top:132.0px" width="10" height="10" viewBox="0 0 10 10"><circle cx="5" cy="5" r="3" fill="#f8e0a0" stroke="#c05a10" stroke-width="1.400"/></svg>
<span class="t" style="left:253px;top:127.0px;font-size:15px;line-height:20px;color:#4a4a4a;letter-spacing:-0.310px;">reslin__DEPL</span>
<svg class="a" style="left:416.0px;top:129.0px" width="10" height="16" viewBox="0 0 10 16"><path d="M5 2.200L7.700 5.800H2.300z" fill="#67655f"/><path d="M5 13.800L7.700 10.200H2.300z" fill="#67655f"/></svg>
<div class="combo" style="left:436px;top:124px;width:83px;height:25px;"></div>
<div style="left:441px;top:125px;width:57px;height:23px;overflow:hidden"><span class="t" style="left:0;top:2px;font-size:15px;line-height:20px;color:#4a4a4a">Magnitude</span></div>
<div style="left:493px;top:126px;width:8px;height:21px;background:linear-gradient(90deg,rgba(246,245,243,0),#f4f3f1)"></div>
<svg class="a" style="left:504.0px;top:129.0px" width="10" height="16" viewBox="0 0 10 16"><path d="M5 2.200L7.700 5.800H2.300z" fill="#67655f"/><path d="M5 13.800L7.700 10.200H2.300z" fill="#67655f"/></svg>
<div style="left:526px;top:133px;width:5px;height:1px;background:#bdb9b2"></div>
<div style="left:526px;top:134px;width:5px;height:1px;background:#fbfbfa"></div>
<div style="left:526px;top:137px;width:5px;height:1px;background:#bdb9b2"></div>
<div style="left:526px;top:138px;width:5px;height:1px;background:#fbfbfa"></div>
<div style="left:526px;top:141px;width:5px;height:1px;background:#bdb9b2"></div>
<div style="left:526px;top:142px;width:5px;height:1px;background:#fbfbfa"></div>
<div class="combo" style="left:534px;top:124px;width:148px;height:25px;"></div>
<span class="t" style="left:539px;top:127.0px;font-size:15px;line-height:20px;color:#4a4a4a;letter-spacing:-0.099px;">Surface</span>
<svg class="a" style="left:667.0px;top:129.0px" width="10" height="16" viewBox="0 0 10 16"><path d="M5 2.200L7.700 5.800H2.300z" fill="#67655f"/><path d="M5 13.800L7.700 10.200H2.300z" fill="#67655f"/></svg>
<div style="left:689px;top:133px;width:5px;height:1px;background:#bdb9b2"></div>
<div style="left:689px;top:134px;width:5px;height:1px;background:#fbfbfa"></div>
<div style="left:689px;top:137px;width:5px;height:1px;background:#bdb9b2"></div>
<div style="left:689px;top:138px;width:5px;height:1px;background:#fbfbfa"></div>
<div style="left:689px;top:141px;width:5px;height:1px;background:#bdb9b2"></div>
<div style="left:689px;top:142px;width:5px;height:1px;background:#fbfbfa"></div>
<svg class="a" style="left:702.0px;top:125.0px" width="24" height="24" viewBox="0 0 24 24"><rect x="1" y="1" width="22" height="22" fill="#e6e8de" stroke="#9c9c8a" stroke-width="1.400"/><path d="M6 6l12 12M18 6l-12 12" stroke="#6a6a58" stroke-width="1.500"/><g fill="#9adf7c" stroke="#5aa83c" stroke-width=".7"><path d="M3.500 3.500h5.500l-5.500 5.500z"/><path d="M20.500 3.500h-5.500l5.500 5.500z"/><path d="M3.500 20.500h5.500l-5.500-5.500z"/><path d="M20.500 20.500h-5.500l5.500-5.500z"/></g></svg>
<svg class="a" style="left:738.0px;top:125.0px" width="24" height="24" viewBox="0 0 24 24"><rect x="1" y="1" width="22" height="22" fill="#e6e8de" stroke="#9c9c8a" stroke-width="1.400"/><path d="M6 6l12 12M18 6l-12 12" stroke="#6a6a58" stroke-width="1.500"/><g fill="#9adf7c" stroke="#5aa83c" stroke-width=".7"><path d="M3.500 3.500h5.500l-5.500 5.500z"/><path d="M20.500 3.500h-5.500l5.500 5.500z"/><path d="M3.500 20.500h5.500l-5.500-5.500z"/><path d="M20.500 20.500h-5.500l5.500-5.500z"/></g><text x="-1" y="12.500" font-family="Liberation Sans,sans-serif" font-size="16" font-weight="bold" fill="#000">D</text></svg>
<svg class="a" style="left:774.0px;top:125.0px" width="24" height="24" viewBox="0 0 24 24"><rect x="3.500" y="4.500" width="14" height="13" fill="none" stroke="#333" stroke-width="1.300" stroke-dasharray="3 2.500"/><circle cx="16.500" cy="16.500" r="4.800" fill="#5cc040"/><circle cx="15.800" cy="15.800" r="2.100" fill="none" stroke="#fff" stroke-width="1.100"/><path d="M17.300 17.300l2 2" stroke="#fff" stroke-width="1.300"/></svg>
<svg class="a" style="left:809.0px;top:125.0px" width="26" height="24" viewBox="0 0 26 24"><path d="M18 1.500l3.800 5h-2v8h-3.600v-8h-2z" fill="#7ed957" stroke="#4e9a30" stroke-width=".7"/><path d="M1 18l5-3.800v2.100h8v3.400h-8v2.100z" fill="#f6c21c" stroke="#b88a0c" stroke-width=".7"/><rect x="14" y="14" width="8" height="8" fill="#f03a14" stroke="#b02a0c" stroke-width=".8"/><text x="1" y="10.500" font-family="Liberation Sans,sans-serif" font-size="10" fill="#444" textLength="11">+X</text></svg>
<svg class="a" style="left:845.0px;top:125.0px" width="26" height="24" viewBox="0 0 26 24"><path d="M6 1.500l3.800 5h-2v8h-3.600v-8h-2z" fill="#7ed957" stroke="#4e9a30" stroke-width=".7"/><path d="M25 18l-5-3.800v2.100h-10v3.400h10v2.100z" fill="#f6c21c" stroke="#b88a0c" stroke-width=".7"/><rect x="2" y="14" width="8" height="8" fill="#f03a14" stroke="#b02a0c" stroke-width=".8"/><text x="10.5" y="10.500" font-family="Liberation Sans,sans-serif" font-size="10" fill="#444" textLength="11">−X</text></svg>
<svg class="a" style="left:881.0px;top:125.0px" width="26" height="24" viewBox="0 0 26 24"><path d="M6 1.500l3.800 5h-2v8h-3.600v-8h-2z" fill="#7ed957" stroke="#4e9a30" stroke-width=".7"/><path d="M25 18l-5-3.800v2.100h-10v3.400h10v2.100z" fill="#f03a14" stroke="#b02a0c" stroke-width=".7"/><rect x="2" y="14" width="8" height="8" fill="#f6c21c" stroke="#b88a0c" stroke-width=".8"/><text x="10.5" y="10.500" font-family="Liberation Sans,sans-serif" font-size="10" fill="#444" textLength="11">+Y</text></svg>
<svg class="a" style="left:917.0px;top:125.0px" width="26" height="24" viewBox="0 0 26 24"><path d="M18 1.500l3.800 5h-2v8h-3.600v-8h-2z" fill="#7ed957" stroke="#4e9a30" stroke-width=".7"/><path d="M1 18l5-3.800v2.100h8v3.400h-8v2.100z" fill="#f03a14" stroke="#b02a0c" stroke-width=".7"/><rect x="14" y="14" width="8" height="8" fill="#f6c21c" stroke="#b88a0c" stroke-width=".8"/><text x="1" y="10.500" font-family="Liberation Sans,sans-serif" font-size="10" fill="#444" textLength="11">−Y</text></svg>
<svg class="a" style="left:953.0px;top:125.0px" width="26" height="24" viewBox="0 0 26 24"><path d="M18 1.500l3.800 5h-2v8h-3.600v-8h-2z" fill="#f6c21c" stroke="#b88a0c" stroke-width=".7"/><path d="M1 18l5-3.800v2.100h8v3.400h-8v2.100z" fill="#f03a14" stroke="#b02a0c" stroke-width=".7"/><rect x="14" y="14" width="8" height="8" fill="#7ed957" stroke="#4e9a30" stroke-width=".8"/><text x="1" y="10.500" font-family="Liberation Sans,sans-serif" font-size="10" fill="#444" textLength="11">+Z</text></svg>
<svg class="a" style="left:989.0px;top:125.0px" width="26" height="24" viewBox="0 0 26 24"><path d="M6 1.500l3.800 5h-2v8h-3.600v-8h-2z" fill="#f6c21c" stroke="#b88a0c" stroke-width=".7"/><path d="M25 18l-5-3.800v2.100h-10v3.400h10v2.100z" fill="#f03a14" stroke="#b02a0c" stroke-width=".7"/><rect x="2" y="14" width="8" height="8" fill="#7ed957" stroke="#4e9a30" stroke-width=".8"/><text x="10.5" y="10.500" font-family="Liberation Sans,sans-serif" font-size="10" fill="#444" textLength="11">−Z</text></svg>
<svg class="a" style="left:1025.0px;top:124.0px" width="26" height="26" viewBox="0 0 26 26"><path d="M5.64 13.50A7 7 0 1 1 16.73 13.02L17.99 13.89L10.28 14.25L12.70 10.19L13.95 11.06A3.6 3.6 0 1 0 8.24 11.31Z" fill="#a6e08a" stroke="#4e9a30" stroke-width="0.9" stroke-linejoin="round"/><text x="8" y="25" font-family="Liberation Sans,sans-serif" font-size="10.500" fill="#555">+90</text></svg>
<svg class="a" style="left:1061.0px;top:124.0px" width="26" height="26" viewBox="0 0 26 26"><path d="M20.36 13.50A7 7 0 1 0 9.27 13.02L8.01 13.89L15.72 14.25L13.30 10.19L12.05 11.06A3.6 3.6 0 1 1 17.76 11.31Z" fill="#a6e08a" stroke="#4e9a30" stroke-width="0.9" stroke-linejoin="round"/><text x="0" y="25" font-family="Liberation Sans,sans-serif" font-size="10.500" fill="#555">−90</text></svg>
<div style="left:1098px;top:133px;width:5px;height:1px;background:#bdb9b2"></div>
<div style="left:1098px;top:134px;width:5px;height:1px;background:#fbfbfa"></div>
<div style="left:1098px;top:137px;width:5px;height:1px;background:#bdb9b2"></div>
<div style="left:1098px;top:138px;width:5px;height:1px;background:#fbfbfa"></div>
<div style="left:1098px;top:141px;width:5px;height:1px;background:#bdb9b2"></div>
<div style="left:1098px;top:142px;width:5px;height:1px;background:#fbfbfa"></div>
<div style="left:1106.5px;top:120.5px;width:33px;height:33px;border:1px solid #b6b1a8;border-radius:4px;background:linear-gradient(#dedcd8,#ecebe8)"></div>
<svg class="a" style="left:1111.0px;top:125.0px" width="24" height="24" viewBox="0 0 24 24"><path d="M8 16V5" stroke="#e8b81c" stroke-width="2.200"/><path d="M8 1.500l3 4.500h-6z" fill="#f6c21c" stroke="#b88a0c" stroke-width=".6"/><path d="M8 15.500l-4 4" stroke="#5cb83c" stroke-width="2.200"/><path d="M1.500 22l1.300-5l3.700 3.700z" fill="#6ccc4a" stroke="#3f8a26" stroke-width=".6"/><path d="M8 15.500h7" stroke="#f0583a" stroke-width="2"/><path d="M18.500 15.500l-4.500-2.700v5.400z" fill="#f0583a"/><path d="M12.500 7q4.500-5 9.500 0q-5 4.500-9.500 0z" fill="#fff" stroke="#333" stroke-width=".9"/><circle cx="17.300" cy="6.600" r="2.300" fill="#24468a"/><circle cx="17.300" cy="6.600" r="1" fill="#0a0a1a"/></svg>
<svg class="a" style="left:1147.0px;top:125.0px" width="24" height="24" viewBox="0 0 24 24"><path d="M19.66 6.07A10 10 0 1 1 11.13 2.54L11.02 1.35L16.26 5.38L11.53 7.11L11.42 5.93A6.6 6.6 0 1 0 17.06 8.26Z" fill="#a6e08a" stroke="#4e9a30" stroke-width="0.9" stroke-linejoin="round"/><circle cx="12" cy="12.500" r="2.500" fill="#f6c21c" stroke="#c89a0c" stroke-width=".6"/></svg>
<svg class="a" style="left:1182.0px;top:125.0px" width="24" height="24" viewBox="0 0 24 24"><path d="M19.66 6.07A10 10 0 1 1 11.13 2.54L11.02 1.35L16.26 5.38L11.53 7.11L11.42 5.93A6.6 6.6 0 1 0 17.06 8.26Z" fill="#a6e08a" stroke="#4e9a30" stroke-width="0.9" stroke-linejoin="round"/><path d="M12 5.500v14M5 12.500h14" stroke="#8a8a78" stroke-width="1"/><circle cx="12" cy="12.500" r="2.500" fill="#f6c21c" stroke="#c89a0c" stroke-width=".6"/></svg>
<svg class="a" style="left:1219.0px;top:125.0px" width="24" height="24" viewBox="0 0 24 24"><path d="M19.66 6.07A10 10 0 1 1 11.13 2.54L11.02 1.35L16.26 5.38L11.53 7.11L11.42 5.93A6.6 6.6 0 1 0 17.06 8.26Z" fill="#a6e08a" stroke="#4e9a30" stroke-width="0.9" stroke-linejoin="round"/><path d="M14 13l8.500 6.500l-3.600.4l2 3.800l-1.800.9l-2-3.800l-2.600 2.300z" fill="#000" stroke="#fff" stroke-width=".5"/></svg>
<div style="left:1255px;top:133px;width:5px;height:1px;background:#bdb9b2"></div>
<div style="left:1255px;top:134px;width:5px;height:1px;background:#fbfbfa"></div>
<div style="left:1255px;top:137px;width:5px;height:1px;background:#bdb9b2"></div>
<div style="left:1255px;top:138px;width:5px;height:1px;background:#fbfbfa"></div>
<div style="left:1255px;top:141px;width:5px;height:1px;background:#bdb9b2"></div>
<div style="left:1255px;top:142px;width:5px;height:1px;background:#fbfbfa"></div>
<span class="t" style="left:1268px;top:127.0px;font-size:15px;line-height:20px;color:#4a4a4a;letter-spacing:0.294px;">annotate_groups</span>
<span class="t" style="left:1397px;top:127.0px;font-size:15px;line-height:20px;color:#4a4a4a;letter-spacing:0.017px;">ShowSalomeObject</span>
<div style="left:0px;top:157px;width:323px;height:1px;background:#e6e4e1"></div>
<span class="t" style="left:2px;top:160.0px;font-size:15px;line-height:20px;color:#4a4a4a;"><span style="letter-spacing:-1.53px">パイプのブラウザー</span></span>
<svg class="a" style="left:286.0px;top:164.0px" width="12" height="12" viewBox="0 0 12 12"><rect x=".5" y=".5" width="10" height="10" rx="2" fill="none" stroke="#6a6862" stroke-width="1"/><rect x="4.500" y="2.500" width="4" height="4" fill="#f2f1f0" stroke="#6a6862" stroke-width="1"/><rect x="2.500" y="4.500" width="4" height="4" fill="#fbfbfa" stroke="#6a6862" stroke-width="1"/></svg>
<svg class="a" style="left:303.0px;top:164.0px" width="12" height="12" viewBox="0 0 12 12"><rect x=".5" y=".5" width="10" height="10" rx="2" fill="none" stroke="#6a6862" stroke-width="1"/><path d="M3 3l5 5M8 3l-5 5" stroke="#55534e" stroke-width="1.800"/></svg>
<div style="left:0px;top:182px;width:317px;height:366px;background:#fff;border:1px solid #b5b0a7"></div>
<div style="left:71px;top:183px;width:1px;height:124px;background:#8c8c8c"></div>
<div style="left:72px;top:218px;width:9px;height:1px;background:#8c8c8c"></div>
<div style="left:72px;top:240px;width:9px;height:1px;background:#8c8c8c"></div>
<div style="left:72px;top:262px;width:9px;height:1px;background:#8c8c8c"></div>
<div style="left:72px;top:284px;width:9px;height:1px;background:#8c8c8c"></div>
<div style="left:77px;top:306px;width:4px;height:1px;background:#8c8c8c"></div>
<div style="left:88px;top:313px;width:1px;height:7px;background:#8c8c8c"></div>
<svg class="a" style="left:67.1px;top:188.2px" width="7.8" height="15.6" viewBox="0 0 10 20"><rect x="1" y="1" width="8" height="17.500" rx="1" fill="#c9c9c9" stroke="#111" stroke-width="1.400"/><rect x="2.800" y="3" width="4.400" height="2" fill="#111"/><rect x="2.800" y="6.500" width="4.400" height="1" fill="#555"/><path d="M2.500 11h5v6h-5z" fill="#8a8a8a"/></svg>
<span class="t" style="left:82px;top:186.0px;font-size:15px;line-height:20px;color:#4a4a4a;letter-spacing:0.343px;">cs://localhost:11111</span>
<div style="left:1px;top:183px;width:315px;height:364px;overflow:hidden">
<span class="t" style="left:99px;top:25.0px;font-size:15px;line-height:20px;color:#4a4a4a;letter-spacing:0.120px;">_ExportedFromSalomeObject_0</span>
<span class="t" style="left:99px;top:47.0px;font-size:15px;line-height:20px;color:#4a4a4a;letter-spacing:0.120px;">_ExportedFromSalomeObject_0</span>
<span class="t" style="left:99px;top:69.0px;font-size:15px;line-height:20px;color:#4a4a4a;letter-spacing:0.120px;">_ExportedFromSalomeObject_0</span>
<span class="t" style="left:99px;top:91.0px;font-size:15px;line-height:20px;color:#4a4a4a;letter-spacing:-0.027px;">2017.med</span>
<span class="t" style="left:99px;top:113.0px;font-size:15px;line-height:20px;color:#4a4a4a;letter-spacing:-0.007px;">20171020.med</span>
</div>
<svg class="a" style="left:4.0px;top:212.0px" width="16" height="12" viewBox="0 0 16 12"><path d="M1 6.500q7-7.500 14 0q-7 6.500-14 0z" fill="#f4f4f4" stroke="#8a8a8a" stroke-width="1"/><circle cx="8" cy="6" r="2.800" fill="#a8a8a8"/><circle cx="8" cy="6" r="1.200" fill="#7a7a7a"/><path d="M1 5.500q7-6.500 14 0" fill="none" stroke="#7a7a7a" stroke-width="1.300"/></svg>
<svg class="a" style="left:80.0px;top:209.0px" width="18" height="18" viewBox="0 0 18 18"><path d="M1.500 4.500l6.500-2.500l8 2v9.500l-6.500 3l-8-3z" fill="#86cc5e" stroke="#4a7a36" stroke-width="1" stroke-linejoin="round"/><path d="M1.500 4.500l8 2.500v9.500" fill="none" stroke="#4a7a36" stroke-width="1"/><path d="M9.500 7l6.500-3" fill="none" stroke="#4a7a36" stroke-width="1"/><path d="M2 5.200l7 2.300v8.300l-7-2.800z" fill="#6aa84c"/><path d="M2.500 4.500l5.500-2l7 1.800l-5.500 2.400z" fill="#a4dc84"/></svg>
<svg class="a" style="left:4.0px;top:234.0px" width="16" height="12" viewBox="0 0 16 12"><path d="M1 6.500q7-7.500 14 0q-7 6.500-14 0z" fill="#f4f4f4" stroke="#8a8a8a" stroke-width="1"/><circle cx="8" cy="6" r="2.800" fill="#a8a8a8"/><circle cx="8" cy="6" r="1.200" fill="#7a7a7a"/><path d="M1 5.500q7-6.500 14 0" fill="none" stroke="#7a7a7a" stroke-width="1.300"/></svg>
<svg class="a" style="left:80.0px;top:231.0px" width="18" height="18" viewBox="0 0 18 18"><path d="M1.500 4.500l6.500-2.500l8 2v9.500l-6.500 3l-8-3z" fill="#86cc5e" stroke="#4a7a36" stroke-width="1" stroke-linejoin="round"/><path d="M1.500 4.500l8 2.500v9.500" fill="none" stroke="#4a7a36" stroke-width="1"/><path d="M9.500 7l6.500-3" fill="none" stroke="#4a7a36" stroke-width="1"/><path d="M2 5.200l7 2.300v8.300l-7-2.800z" fill="#6aa84c"/><path d="M2.500 4.500l5.500-2l7 1.800l-5.500 2.400z" fill="#a4dc84"/></svg>
<svg class="a" style="left:4.0px;top:256.0px" width="16" height="12" viewBox="0 0 16 12"><path d="M1 6.500q7-7.500 14 0q-7 6.500-14 0z" fill="#f4f4f4" stroke="#8a8a8a" stroke-width="1"/><circle cx="8" cy="6" r="2.800" fill="#a8a8a8"/><circle cx="8" cy="6" r="1.200" fill="#7a7a7a"/><path d="M1 5.500q7-6.500 14 0" fill="none" stroke="#7a7a7a" stroke-width="1.300"/></svg>
<svg class="a" style="left:80.0px;top:253.0px" width="18" height="18" viewBox="0 0 18 18"><path d="M1.500 4.500l6.500-2.500l8 2v9.500l-6.500 3l-8-3z" fill="#86cc5e" stroke="#4a7a36" stroke-width="1" stroke-linejoin="round"/><path d="M1.500 4.500l8 2.500v9.500" fill="none" stroke="#4a7a36" stroke-width="1"/><path d="M9.500 7l6.500-3" fill="none" stroke="#4a7a36" stroke-width="1"/><path d="M2 5.200l7 2.300v8.300l-7-2.800z" fill="#6aa84c"/><path d="M2.500 4.500l5.500-2l7 1.800l-5.500 2.400z" fill="#a4dc84"/></svg>
<svg class="a" style="left:4.0px;top:278.0px" width="16" height="12" viewBox="0 0 16 12"><path d="M1 6.500q7-7.500 14 0q-7 6.500-14 0z" fill="#f4f4f4" stroke="#8a8a8a" stroke-width="1"/><circle cx="8" cy="6" r="2.800" fill="#a8a8a8"/><circle cx="8" cy="6" r="1.200" fill="#7a7a7a"/><path d="M1 5.500q7-6.500 14 0" fill="none" stroke="#7a7a7a" stroke-width="1.300"/></svg>
<svg class="a" style="left:80.0px;top:275.0px" width="18" height="18" viewBox="0 0 18 18"><path d="M1.500 4.500l6.500-2.500l8 2v9.500l-6.500 3l-8-3z" fill="#86cc5e" stroke="#4a7a36" stroke-width="1" stroke-linejoin="round"/><path d="M1.500 4.500l8 2.500v9.500" fill="none" stroke="#4a7a36" stroke-width="1"/><path d="M9.500 7l6.500-3" fill="none" stroke="#4a7a36" stroke-width="1"/><path d="M2 5.200l7 2.300v8.300l-7-2.800z" fill="#6aa84c"/><path d="M2.500 4.500l5.500-2l7 1.800l-5.500 2.400z" fill="#a4dc84"/></svg>
<svg class="a" style="left:4.0px;top:300.0px" width="16" height="12" viewBox="0 0 16 12"><path d="M1 6.500q7-7.500 14 0q-7 6.500-14 0z" fill="#f4f4f4" stroke="#8a8a8a" stroke-width="1"/><circle cx="8" cy="6" r="2.800" fill="#a8a8a8"/><circle cx="8" cy="6" r="1.200" fill="#7a7a7a"/><path d="M1 5.500q7-6.500 14 0" fill="none" stroke="#7a7a7a" stroke-width="1.300"/></svg>
<svg class="a" style="left:80.0px;top:297.0px" width="18" height="18" viewBox="0 0 18 18"><path d="M1.500 4.500l6.500-2.500l8 2v9.500l-6.500 3l-8-3z" fill="#86cc5e" stroke="#4a7a36" stroke-width="1" stroke-linejoin="round"/><path d="M1.500 4.500l8 2.500v9.500" fill="none" stroke="#4a7a36" stroke-width="1"/><path d="M9.500 7l6.500-3" fill="none" stroke="#4a7a36" stroke-width="1"/><path d="M2 5.200l7 2.300v8.300l-7-2.800z" fill="#6aa84c"/><path d="M2.500 4.500l5.500-2l7 1.800l-5.500 2.400z" fill="#a4dc84"/></svg>
<svg class="a" style="left:66.5px;top:301.0px" width="10" height="10" viewBox="0 0 10 10"><rect x=".5" y=".5" width="9" height="9" fill="#fff" stroke="#8c8c8c" stroke-width="1"/><path d="M2.500 5h5" stroke="#111" stroke-width="1.200"/></svg>
<div style="left:62px;top:319px;width:148px;height:18px;background:#87a556"></div>
<svg class="a" style="left:80.0px;top:319.0px" width="18" height="18" viewBox="0 0 18 18"><path d="M1.500 4.500l6.500-2.500l8 2v9.500l-6.500 3l-8-3z" fill="#86cc5e" stroke="#55803e" stroke-width="1" stroke-linejoin="round"/><path d="M1.500 4.500l8 2.500v9.500" fill="none" stroke="#55803e" stroke-width="1"/><path d="M9.500 7l6.500-3" fill="none" stroke="#55803e" stroke-width="1"/><path d="M2 5.200l7 2.300v8.300l-7-2.800z" fill="#6a9a50"/><path d="M2.500 4.500l5.500-2l7 1.800l-5.500 2.400z" fill="#a4d488"/></svg>
<svg class="a" style="left:4.0px;top:322.0px" width="16" height="12" viewBox="0 0 16 12"><path d="M1 6.500q7-7.500 14 0q-7 6.500-14 0z" fill="#fff" stroke="#222" stroke-width="1"/><circle cx="8" cy="6" r="3" fill="#27408b"/><circle cx="8" cy="6" r="1.300" fill="#05051a"/><path d="M1 5.500q7-6.500 14 0" fill="none" stroke="#111" stroke-width="1.600"/></svg>
<span class="t" style="left:99px;top:318.0px;font-size:15px;line-height:20px;color:#f4f4ee;letter-spacing:0.258px;">WarpByVector1</span>
<div class="sbt" style="left:2px;top:549px;width:314px;height:13px;"></div>
<div class="sbh" style="left:13px;top:549px;width:229px;height:13px;"></div>
<svg class="a" style="left:4.0px;top:551.5px" width="6" height="8" viewBox="0 0 6 8"><path d="M5 1l-3.500 3l3.500 3z" fill="#c4c1bb"/></svg>
<svg class="a" style="left:308.0px;top:551.5px" width="6" height="8" viewBox="0 0 6 8"><path d="M1.200 1l4 3l-4 3z" fill="#55534e"/></svg>
<div style="left:0px;top:597px;width:317px;height:1px;background:#c4c0b8"></div>
<div style="left:184px;top:571px;width:46px;height:27px;border:1px solid #c4c0b8;border-bottom:none;border-radius:4px 4px 0 0;background:linear-gradient(#f0efed,#e2e0dc)"></div>
<span class="t" style="left:192px;top:575.0px;font-size:15px;line-height:20px;color:#4a4a4a;">情報</span>
<div style="left:0px;top:568px;width:184px;height:31px;border:1px solid #c4c0b8;border-bottom:none;border-radius:5px 5px 0 0;background:#f7f6f5"></div>
<span class="t" style="left:8px;top:573.0px;font-size:15px;line-height:20px;color:#4a4a4a;"><span style="letter-spacing:-2.6px">オブジェクト</span> <span style="letter-spacing:-2.06px">インスペクター</span></span>
<span class="t" style="left:3px;top:600.5px;font-size:15px;line-height:20px;color:#4a4a4a;"><span style="letter-spacing:-2.6px">オブジェクト</span> <span style="letter-spacing:-2.06px">インスペクター</span></span>
<svg class="a" style="left:286.0px;top:605.0px" width="12" height="12" viewBox="0 0 12 12"><rect x=".5" y=".5" width="10" height="10" rx="2" fill="none" stroke="#6a6862" stroke-width="1"/><rect x="4.500" y="2.500" width="4" height="4" fill="#f2f1f0" stroke="#6a6862" stroke-width="1"/><rect x="2.500" y="4.500" width="4" height="4" fill="#fbfbfa" stroke="#6a6862" stroke-width="1"/></svg>
<svg class="a" style="left:303.0px;top:605.0px" width="12" height="12" viewBox="0 0 12 12"><rect x=".5" y=".5" width="10" height="10" rx="2" fill="none" stroke="#6a6862" stroke-width="1"/><path d="M3 3l5 5M8 3l-5 5" stroke="#55534e" stroke-width="1.800"/></svg>
<div class="btnd" style="left:10px;top:634px;width:83px;height:24px;"></div>
<svg class="a" style="left:19.0px;top:636.0px" width="18" height="18" viewBox="0 0 18 18"><g opacity=".45"><path d="M2.500 6l5-2l4.500 2v7l-5 2.500l-4.500-2.500z" fill="#dcdcd8" stroke="#6a6a66" stroke-width="1"/><path d="M2.500 6l4.500 2l5-2M7 8v7.500" fill="none" stroke="#6a6a66" stroke-width=".9"/><path d="M8.500 9l5-5l-2.200-.4l5-2.100l-1.500 5.500l-.7-1.800l-4.400 5z" fill="#b8b8b4" stroke="#6a6a66" stroke-width=".7"/></g></svg>
<span class="t" style="left:40px;top:636.0px;font-size:15px;line-height:20px;color:#a9a59e;letter-spacing:0.296px;"><u>A</u>pply</span>
<div class="btnd" style="left:97px;top:634px;width:83px;height:24px;"></div>
<svg class="a" style="left:109.0px;top:637.0px" width="16" height="16" viewBox="0 0 16 16"><circle cx="8" cy="8" r="6.500" fill="#c4c4c0" stroke="#b0b0ac" stroke-width="1"/><path d="M3.800 11.500l8-7.500" stroke="#e4e4e0" stroke-width="2.200"/></svg>
<span class="t" style="left:128px;top:636.0px;font-size:15px;line-height:20px;color:#a9a59e;letter-spacing:-0.237px;"><u>R</u>eset</span>
<div class="btn" style="left:184px;top:634px;width:83px;height:24px;"></div>
<svg class="a" style="left:191.5px;top:637.0px" width="16" height="16" viewBox="0 0 16 16"><path d="M2.500 4.500l2-2l3.500 3.500l3.500-3.500l2 2l-3.500 3.500l3.500 3.500l-2 2l-3.500-3.500l-3.500 3.500l-2-2l3.500-3.500z" fill="#f0582a" stroke="#c83a14" stroke-width=".8" stroke-linejoin="round"/></svg>
<span class="t" style="left:211px;top:636.0px;font-size:15px;line-height:20px;color:#4a4a4a;letter-spacing:0.273px;"><u>D</u>elete</span>
<div class="btn" style="left:271px;top:634px;width:36px;height:24px;"></div>
<svg class="a" style="left:281.0px;top:636.0px" width="16" height="18" viewBox="0 0 16 18"><path d="M3.500 5.500q0-4 4.500-4q4.500 0 4.500 3.700q0 2.100-2.100 3.300q-1.100.7-1.100 2.100v.4h-2.900v-.7q0-2.100 1.800-3.300q1.100-.7 1.100-1.800q0-1.300-1.400-1.300q-1.600 0-1.600 1.800z" fill="url(#hlg)" stroke="#0a5fb0" stroke-width=".6"/><rect x="6.300" y="12.700" width="3.200" height="3.200" rx=".6" fill="#1588e8" stroke="#0a5fb0" stroke-width=".6"/></svg>
<div class="field" style="left:10px;top:666px;width:273px;height:25px;"></div>
<span class="t" style="left:13px;top:668.5px;font-size:15px;line-height:20px;color:#b4b0a9;letter-spacing:-0.189px;">Search ... (use Esc to clear text)</span>
<div class="btn" style="left:287px;top:668px;width:20px;height:21px;"></div>
<svg class="a" style="left:289.0px;top:670.5px" width="16" height="16" viewBox="0 0 16 16"><g transform="translate(8,8)"><g fill="#d4ddf0" stroke="#6a7aa8" stroke-width=".7"><rect x="-1.500" y="-7" width="3" height="3.500" rx=".6" transform="rotate(0)"/><rect x="-1.500" y="-7" width="3" height="3.500" rx=".6" transform="rotate(45)"/><rect x="-1.500" y="-7" width="3" height="3.500" rx=".6" transform="rotate(90)"/><rect x="-1.500" y="-7" width="3" height="3.500" rx=".6" transform="rotate(135)"/><rect x="-1.500" y="-7" width="3" height="3.500" rx=".6" transform="rotate(180)"/><rect x="-1.500" y="-7" width="3" height="3.500" rx=".6" transform="rotate(225)"/><rect x="-1.500" y="-7" width="3" height="3.500" rx=".6" transform="rotate(270)"/><rect x="-1.500" y="-7" width="3" height="3.500" rx=".6" transform="rotate(315)"/></g><circle r="4.600" fill="#e4eaf6" stroke="#6a7aa8" stroke-width=".8"/><circle r="1.900" fill="#f7f6f5" stroke="#6a7aa8" stroke-width=".8"/></g></svg>
<div style="left:9px;top:698px;width:205px;height:27px;border:1px solid #c9c5be;background:#f2f1f0"></div>
<svg class="a" style="left:19.0px;top:708.0px" width="14" height="6" viewBox="0 0 14 6"><rect x=".5" y=".5" width="13" height="4.500" fill="#8ca0e0" stroke="#1a2a8a" stroke-width="1"/></svg>
<div style="left:40px;top:700px;width:165px;height:23px;overflow:hidden"><span class="t" style="left:1px;top:1px;font-size:15px;line-height:20px;font-weight:bold;color:#4a4a4a;letter-spacing:0.27px">Properties (WarpByVector1)</span></div>
<div style="left:196px;top:700px;width:10px;height:23px;background:linear-gradient(90deg,rgba(242,241,240,0),#f2f1f0)"></div>
<div class="btn" style="left:219px;top:699px;width:36px;height:25px;"></div>
<svg class="a" style="left:229.0px;top:703.0px" width="16" height="16" viewBox="0 0 16 16"><path d="M2.500 1.500h5l3 3v7h-8z" fill="#f4f4f2" stroke="#333" stroke-width="1"/><path d="M5.500 4.500h5l3 3v7h-8z" fill="#fbfbfa" stroke="#333" stroke-width="1"/><path d="M10.500 4.500v3h3" fill="none" stroke="#333" stroke-width=".8"/></svg>
<div style="left:261px;top:699px;width:35px;height:25px;overflow:hidden"><div class="btnd" style="left:0;top:0;width:36px;height:25px"></div></div>
<svg class="a" style="left:271.0px;top:703.0px" width="16" height="16" viewBox="0 0 16 16"><g opacity=".6"><rect x="2" y="2.500" width="10" height="11" rx="1" fill="#9a9a96" stroke="#6a6a66"/><rect x="4.500" y="1" width="5" height="3" rx="1" fill="#c9c9c5" stroke="#6a6a66" stroke-width=".8"/><path d="M6.500 6.500h5l2.500 2.500v6h-7.500z" fill="#fbfbfa" stroke="#777" stroke-width=".9"/></g></svg>
<span class="t" style="left:9px;top:730.0px;font-size:15px;line-height:20px;color:#4a4a4a;letter-spacing:0.140px;">Vectors</span>
<div style="left:96px;top:732px;width:200px;height:25px;overflow:hidden"><div style="left:0;top:0;width:210px;height:25px;border:1px solid #d2cec8;border-radius:4px;background:#f0efed"></div></div>
<span class="t" style="left:101px;top:735.0px;font-size:15px;line-height:20px;color:#b4b0a9;letter-spacing:-0.310px;">reslin__DEPL</span>
<span class="t" style="left:9px;top:761.0px;font-size:15px;line-height:20px;color:#4a4a4a;letter-spacing:-0.267px;">Scale Factor</span>
<div style="left:98px;top:774px;width:54px;height:5px;background:#87a556;border:1px solid #6f8c40;border-radius:3px"></div>
<div style="left:152px;top:774px;width:17px;height:5px;background:#e4e2de;border:1px solid #cfcbc4;border-radius:3px"></div>
<svg class="a" style="left:143.9px;top:767.4px" width="15.6" height="20.8" viewBox="0 0 12 16"><path d="M1.500 2.500q0-1.500 1.500-1.500h6q1.500 0 1.500 1.500v8l-4.500 4.500l-4.500-4.500z" fill="#f4f3f1" stroke="#a8a49c" stroke-width="1"/><path d="M4 5.500h4M4 7.500h4M4 9.500h4" stroke="#c4c0b8" stroke-width=".8"/></svg>
<div style="left:178px;top:765px;width:118px;height:24px;overflow:hidden"><div class="field" style="left:0;top:0;width:130px;height:24px"></div></div>
<span class="t" style="left:181px;top:767.0px;font-size:15px;line-height:20px;color:#4a4a4a;letter-spacing:-0.025px;">0.00583671</span>
<div style="left:9px;top:797px;width:205px;height:27px;border:1px solid #c9c5be;background:#f2f1f0"></div>
<svg class="a" style="left:19.0px;top:807.0px" width="14" height="6" viewBox="0 0 14 6"><rect x=".5" y=".5" width="13" height="4.500" fill="#8ca0e0" stroke="#1a2a8a" stroke-width="1"/></svg>
<div style="left:40px;top:799px;width:165px;height:23px;overflow:hidden"><span class="t" style="left:1px;top:1px;font-size:15px;line-height:20px;font-weight:bold;color:#4a4a4a;letter-spacing:-0.02px">Display (UnstructuredGridRepresentation)</span></div>
<div style="left:196px;top:799px;width:10px;height:23px;background:linear-gradient(90deg,rgba(242,241,240,0),#f2f1f0)"></div>
<div class="btn" style="left:219px;top:798px;width:36px;height:25px;"></div>
<svg class="a" style="left:229.0px;top:802.0px" width="16" height="16" viewBox="0 0 16 16"><path d="M2.500 1.500h5l3 3v7h-8z" fill="#f4f4f2" stroke="#333" stroke-width="1"/><path d="M5.500 4.500h5l3 3v7h-8z" fill="#fbfbfa" stroke="#333" stroke-width="1"/><path d="M10.500 4.500v3h3" fill="none" stroke="#333" stroke-width=".8"/></svg>
<div style="left:261px;top:798px;width:35px;height:25px;overflow:hidden"><div class="btnd" style="left:0;top:0;width:36px;height:25px"></div></div>
<svg class="a" style="left:271.0px;top:802.0px" width="16" height="16" viewBox="0 0 16 16"><g opacity=".6"><rect x="2" y="2.500" width="10" height="11" rx="1" fill="#9a9a96" stroke="#6a6a66"/><rect x="4.500" y="1" width="5" height="3" rx="1" fill="#c9c9c5" stroke="#6a6a66" stroke-width=".8"/><path d="M6.500 6.500h5l2.500 2.500v6h-7.500z" fill="#fbfbfa" stroke="#777" stroke-width=".9"/></g></svg>
<span class="t" style="left:9px;top:829.0px;font-size:15px;line-height:20px;color:#4a4a4a;letter-spacing:0.233px;">Representation</span>
<div style="left:144px;top:831px;width:152px;height:25px;overflow:hidden"><div class="combo" style="left:0;top:0;width:170px;height:25px"></div></div>
<span class="t" style="left:149px;top:834.0px;font-size:15px;line-height:20px;color:#4a4a4a;letter-spacing:-0.099px;">Surface</span>
<span class="t" style="left:9px;top:864.0px;font-size:15px;line-height:20px;color:#4a4a4a;font-weight:bold;letter-spacing:-0.207px;">Coloring</span>
<div style="left:9px;top:883px;width:287px;height:1px;background:#c9c5be"></div>
<div class="combo" style="left:10px;top:891px;width:202px;height:24px;"></div>
<svg class="a" style="left:19.0px;top:897.5px" width="10" height="10" viewBox="0 0 10 10"><circle cx="5" cy="5" r="3" fill="#f8e0a0" stroke="#c05a10" stroke-width="1.400"/></svg>
<span class="t" style="left:35px;top:893.0px;font-size:15px;line-height:20px;color:#4a4a4a;letter-spacing:-0.310px;">reslin__DEPL</span>
<svg class="a" style="left:197.0px;top:895.0px" width="10" height="16" viewBox="0 0 10 16"><path d="M5 2.200L7.700 5.800H2.300z" fill="#67655f"/><path d="M5 13.800L7.700 10.200H2.300z" fill="#67655f"/></svg>
<div style="left:218px;top:891px;width:78px;height:24px;overflow:hidden"><div class="combo" style="left:0;top:0;width:100px;height:24px"></div><span class="t" style="left:5px;top:2px;font-size:15px;line-height:20px;color:#4a4a4a;letter-spacing:-0.1px">Magnitude</span></div>
<div class="btn" style="left:10px;top:922px;width:119px;height:24px;"></div>
<svg class="a" style="left:44.0px;top:924.0px" width="18" height="18" viewBox="0 0 18 18"><rect x="2" y="10" width="15" height="6.500" fill="url(#cbh)"/><circle cx="6" cy="6" r="4.800" fill="#a4dc8a" stroke="#6cb04c" stroke-width=".8"/></svg>
<span class="t" style="left:63px;top:924.0px;font-size:15px;line-height:20px;color:#4a4a4a;">編集</span>
<div class="btn" style="left:135px;top:922px;width:36px;height:24px;"></div>
<svg class="a" style="left:143.0px;top:924.0px" width="20" height="18" viewBox="0 0 20 18"><path d="M1 5l4-4v2.500h10v-2.500l4 4l-4 4v-2.500h-10v2.500z" fill="#9adf7c" stroke="#62b344" stroke-width=".8" stroke-linejoin="round"/><path d="M1.500 14h17M1.500 11.500v5M18.500 11.500v5M6 12.500v3M10 12.500v3M14 12.500v3" stroke="#8a8a78" stroke-width="1" fill="none"/></svg>
<div class="btn" style="left:177px;top:922px;width:36px;height:24px;"></div>
<svg class="a" style="left:185.0px;top:924.0px" width="20" height="18" viewBox="0 0 20 18"><path d="M1 5l4-4v2.500h10v-2.500l4 4l-4 4v-2.500h-10v2.500z" fill="#9adf7c" stroke="#62b344" stroke-width=".8" stroke-linejoin="round"/><path d="M1.500 14h17M1.500 11.500v5M6 12.500v3" stroke="#8a8a78" stroke-width="1" fill="none"/><text x="10.500" y="17.500" font-family="Liberation Sans,sans-serif" font-size="14" font-weight="bold" fill="#000">c</text></svg>
<div class="btn" style="left:219px;top:922px;width:36px;height:24px;"></div>
<svg class="a" style="left:227.0px;top:924.0px" width="20" height="18" viewBox="0 0 20 18"><path d="M1 5l4-4v2.500h10v-2.500l4 4l-4 4v-2.500h-10v2.500z" fill="#9adf7c" stroke="#62b344" stroke-width=".8" stroke-linejoin="round"/><path d="M1.500 14h17M1.500 11.500v5M6 12.500v3" stroke="#8a8a78" stroke-width="1" fill="none"/><text x="11.500" y="17.500" font-family="Liberation Serif,serif" font-size="16" font-weight="bold" font-style="italic" fill="#000">t</text></svg>
<div style="left:261px;top:922px;width:35px;height:24px;overflow:hidden"><div class="btn" style="left:0;top:0;width:36px;height:24px"></div></div>
<svg class="a" style="left:270.0px;top:924.0px" width="18" height="18" viewBox="0 0 18 18"><path d="M2 15v-11.500h5l1.500 1.500h7v10z" fill="#f2e2a0" stroke="#b8a04a" stroke-width=".9"/><path d="M4 3.500h5v3h-5z" fill="#fbf6d8" stroke="#c8b46a" stroke-width=".5"/><path d="M12 17q-5.500-3.500-5.500-6.500q0-2.500 2.500-2.500q2 0 3 1.800q1-1.800 3-1.800q2.500 0 2.500 2.500q0 3-5.500 6.500z" fill="#e8141c" stroke="#a00a10" stroke-width=".6"/></svg>
<span class="t" style="left:9px;top:954.0px;font-size:15px;line-height:20px;color:#4a4a4a;font-weight:bold;letter-spacing:-0.000px;">Styling</span>
<div style="left:9px;top:973px;width:287px;height:1px;background:#c9c5be"></div>
<span class="t" style="left:9px;top:978.0px;font-size:15px;line-height:20px;color:#4a4a4a;letter-spacing:0.307px;">Opacity</span>
<div style="left:146px;top:991px;width:78px;height:5px;background:#87a556;border:1px solid #6f8c40;border-radius:3px"></div>
<svg class="a" style="left:216.2px;top:984.4px" width="15.6" height="20.8" viewBox="0 0 12 16"><path d="M1.500 2.500q0-1.500 1.500-1.500h6q1.500 0 1.500 1.500v8l-4.500 4.500l-4.500-4.500z" fill="#f4f3f1" stroke="#a8a49c" stroke-width="1"/><path d="M4 5.500h4M4 7.500h4M4 9.500h4" stroke="#c4c0b8" stroke-width=".8"/></svg>
<div style="left:238px;top:981px;width:58px;height:23px;overflow:hidden"><div class="field" style="left:0;top:0;width:70px;height:28px"></div></div>
<span class="t" style="left:242px;top:984.0px;font-size:15px;line-height:20px;color:#4a4a4a;">1</span>
<div style="left:296px;top:698px;width:13px;height:306px;background:#f4f3f2;border-radius:6px"></div>
<div style="left:297px;top:711px;width:11px;height:58px;border:1px solid #aaa59c;border-radius:6px;background:linear-gradient(90deg,#e6e4e1,#cfccc7)"></div>
<svg class="a" style="left:298.5px;top:701.0px" width="8" height="6" viewBox="0 0 8 6"><path d="M1 5l3-3.500l3 3.500z" fill="#c9c6c0"/></svg>
<svg class="a" style="left:298.5px;top:994.0px" width="8" height="6" viewBox="0 0 8 6"><path d="M1 1.200l3 3.800l3-3.800z" fill="#67655f"/></svg>
<div class="sbt" style="left:10px;top:1005px;width:286px;height:12px;"></div>
<div class="sbh" style="left:22px;top:1005px;width:199px;height:12px;"></div>
<svg class="a" style="left:14.0px;top:1007.0px" width="6" height="8" viewBox="0 0 6 8"><path d="M5 1l-3.500 3l3.500 3z" fill="#c4c1bb"/></svg>
<svg class="a" style="left:286.0px;top:1007.0px" width="6" height="8" viewBox="0 0 6 8"><path d="M1.200 1l4 3l-4 3z" fill="#55534e"/></svg>
<div style="left:323px;top:157px;width:1597px;height:868px;border:2px solid #c8c5bf;border-right:none;border-bottom:none"></div>
<div style="left:326px;top:163px;width:524px;height:27px;border:1px solid #c4c0b8;border-radius:4px 4px 0 0;background:linear-gradient(#f0efed,#e0deda)"></div>
<span class="t" style="left:511px;top:167.0px;font-size:15px;line-height:20px;color:#4a4a4a;letter-spacing:-0.139px;">VTK scene:2 - viewer:1</span>
<div style="left:849px;top:159px;width:522px;height:32px;border:1px solid #c4c0b8;border-bottom:none;border-radius:5px 5px 0 0;background:#f7f6f5"></div>
<span class="t" style="left:1012px;top:165.5px;font-size:15px;line-height:20px;color:#8fae5e;">ParaView <span style="letter-spacing:-1.6px">シーン</span>:2 - <span style="letter-spacing:-1.95px">ビューア</span>:1</span>
<div style="left:1371px;top:190px;width:530px;height:1px;background:#c4c0b8"></div>
<div style="left:325px;top:190px;width:525px;height:1px;background:#c4c0b8"></div>
<svg class="a" style="left:1902.0px;top:169.0px" width="12" height="12" viewBox="0 0 12 12"><rect x=".5" y=".5" width="10" height="10" rx="2" fill="none" stroke="#6a6862" stroke-width="1"/><path d="M3 3l5 5M8 3l-5 5" stroke="#55534e" stroke-width="1.800"/></svg>
<div style="left:326px;top:232px;width:1591px;height:791px;background:#f7f6f5;border:1px solid #c4c0b8;border-radius:0 5px 0 0"></div>
<div style="left:617px;top:193px;width:25px;height:40px;border:1px solid #c4c0b8;border-bottom:none;border-radius:4px 4px 0 0;background:linear-gradient(#f0efed,#e0deda)"></div>
<span class="t" style="left:626px;top:203.5px;font-size:13px;line-height:17px;color:#4a4a4a;">+</span>
<div style="left:327px;top:191px;width:291px;height:42px;border:1px solid #c4c0b8;border-bottom:none;border-radius:5px 5px 0 0;background:#f7f6f5"></div>
<svg class="a" style="left:331.0px;top:205.0px" width="12" height="12" viewBox="0 0 12 12"><rect x="1.500" y="2" width="9" height="8.500" fill="#fff" stroke="#111" stroke-width="1.300"/><path d="M1.500 3h9" stroke="#111" stroke-width="2"/></svg>
<span class="t" style="left:438px;top:202.0px;font-size:15px;line-height:20px;color:#4a4a4a;letter-spacing:0.124px;">Layout #1</span>
<svg class="a" style="left:510.0px;top:206.0px" width="12" height="12" viewBox="0 0 12 12"><rect x="1" y="1" width="10" height="10" rx="1.500" fill="none" stroke="#66645e" stroke-width="1"/><path d="M3.500 3.500l5 5M8.500 3.500l-5 5" stroke="#4c4a45" stroke-width="1.600"/></svg>
<svg class="a" style="left:333.6px;top:239.6px" width="12.8" height="12.8" viewBox="0 0 16 16"><rect x="5" y="2.5" width="9" height="7" rx="1" fill="#b8b8ae" stroke="#6a6a5e" stroke-width=".9"/><circle cx="9.5" cy="6" r="1.900" fill="#f4f4f2" stroke="#6a6a5e" stroke-width=".7"/><path d="M1 9l1.500 5l4.500-1.500l-2-1q2-1.500 4 0q1.500 2-.5 4q5-1.500 3.500-5.500q-2.500-3.500-7-1.500z" fill="#f0583a" stroke="#b02a0c" stroke-width=".6"/></svg>
<svg class="a" style="left:357.6px;top:239.6px" width="12.8" height="12.8" viewBox="0 0 16 16"><g opacity=".55"><rect x="2" y="2" width="9" height="7" rx="1" fill="#c9c9c2" stroke="#8a8a80" stroke-width=".9"/><circle cx="6.500" cy="5.500" r="1.900" fill="#f4f4f2" stroke="#8a8a80" stroke-width=".7"/><rect x="6" y="7" width="9" height="7" rx="1" fill="#c9c9c2" stroke="#8a8a80" stroke-width=".9"/><circle cx="10.500" cy="10.500" r="1.900" fill="#f4f4f2" stroke="#8a8a80" stroke-width=".7"/></g></svg>
<div style="left:381px;top:239px;width:1px;height:14px;background:#d0cdc7"></div>
<span class="t" style="left:393px;top:239.0px;font-size:11px;line-height:14px;color:#333;letter-spacing:-1.030px;">2D</span>
<svg class="a" style="left:416.6px;top:239.6px" width="12.8" height="12.8" viewBox="0 0 16 16"><rect x="1.500" y="3" width="11" height="9" rx="1" fill="#b8b8ae" stroke="#6a6a5e" stroke-width="1"/><rect x="4" y="1.500" width="4" height="2" fill="#6a6a5e"/><circle cx="7" cy="7.500" r="2.600" fill="#e9e9e4" stroke="#6a6a5e" stroke-width=".8"/><circle cx="11.500" cy="11.500" r="3.300" fill="#5cc040"/><circle cx="11.200" cy="11.200" r="1.400" fill="none" stroke="#fff" stroke-width=".8"/></svg>
<div style="left:440px;top:239px;width:1px;height:14px;background:#d0cdc7"></div>
<svg class="a" style="left:452.3px;top:239.8px" width="12.48" height="12.48" viewBox="0 0 16 16"><rect x="1.500" y="1.500" width="11" height="11" fill="none" stroke="#222" stroke-width="1.100" stroke-dasharray="1.200 1.200"/><path d="M5.500 3v5M3 5.500h5" stroke="#1e8a1e" stroke-width="1.800"/><path d="M8 7.500l6 4.500l-2.500.3l1.300 2.600l-1.200.6l-1.300-2.600l-1.800 1.600z" fill="#555" stroke="#222" stroke-width=".4"/></svg>
<svg class="a" style="left:476.3px;top:239.8px" width="12.48" height="12.48" viewBox="0 0 16 16"><rect x="1.500" y="1.500" width="11" height="11" fill="none" stroke="#222" stroke-width="1.100" stroke-dasharray="1.200 1.200"/><path d="M3 5h5.500" stroke="#e01818" stroke-width="2"/><path d="M8 7.500l6 4.500l-2.500.3l1.300 2.600l-1.200.6l-1.300-2.600l-1.800 1.600z" fill="#555" stroke="#222" stroke-width=".4"/></svg>
<svg class="a" style="left:500.3px;top:239.8px" width="12.48" height="12.48" viewBox="0 0 16 16"><rect x="1.500" y="1.500" width="11" height="11" fill="none" stroke="#222" stroke-width="1.100" stroke-dasharray="1.200 1.200"/><path d="M6 2v4M4 4h4" stroke="#1e8a1e" stroke-width="1.600"/><path d="M3.500 8.500h5" stroke="#e01818" stroke-width="1.800"/><path d="M8 7.500l6 4.500l-2.500.3l1.300 2.600l-1.200.6l-1.300-2.600l-1.800 1.600z" fill="#555" stroke="#222" stroke-width=".4"/></svg>
<div style="left:523px;top:239px;width:1px;height:14px;background:#d0cdc7"></div>
<svg class="a" style="left:534.8px;top:239.8px" width="12.48" height="12.48" viewBox="0 0 16 16"><rect x="1.500" y="1.500" width="11" height="11" fill="none" stroke="#222" stroke-width="1.100" stroke-dasharray="1.200 1.200"/><path d="M7 3.500l4 7h-8z" fill="#8ed86c" stroke="#5aa83c" stroke-width=".6"/><path d="M8 7.500l6 4.500l-2.500.3l1.300 2.600l-1.200.6l-1.300-2.600l-1.800 1.600z" fill="#555" stroke="#222" stroke-width=".4"/></svg>
<svg class="a" style="left:558.8px;top:239.8px" width="12.48" height="12.48" viewBox="0 0 16 16"><rect x="1.500" y="1.500" width="11" height="11" fill="none" stroke="#222" stroke-width="1.100" stroke-dasharray="1.200 1.200"/><path d="M7 3.500l4 7h-8z" fill="none" stroke="#e8a0a0" stroke-width=".6"/><circle cx="7" cy="3.500" r=".9" fill="#e01818"/><circle cx="3.200" cy="10.300" r=".9" fill="#e01818"/><circle cx="10.800" cy="10.300" r=".9" fill="#e01818"/><path d="M8 7.500l6 4.500l-2.500.3l1.300 2.600l-1.200.6l-1.300-2.600l-1.800 1.600z" fill="#555" stroke="#222" stroke-width=".4"/></svg>
<svg class="a" style="left:583.3px;top:239.8px" width="12.48" height="12.48" viewBox="0 0 16 16"><path d="M1.500 3l5 1.500v8l-5-2z" fill="#b8dca8" stroke="#5a8a4a" stroke-width=".7"/><path d="M6.500 4.500l7-1.500v7.500l-7 2z" fill="#7cc05c" stroke="#4a7a3a" stroke-width=".7"/><path d="M1.500 3l7-1.500l5 1.500" fill="none" stroke="#5a8a4a" stroke-width=".7"/><path d="M6 8l5 3.800l-2 .2l1 2.100l-1 .5l-1-2.100l-1.500 1.300z" fill="#555"/></svg>
<svg class="a" style="left:607.3px;top:239.8px" width="12.48" height="12.48" viewBox="0 0 16 16"><path d="M2 3l4.500 1.500v8l-4.500-2z" fill="#f6d8d0" stroke="#c87a6a" stroke-width=".7"/><path d="M6.500 4.500l6.500-1.500v7.500l-6.500 2z" fill="none" stroke="#c87a6a" stroke-width=".7" stroke-dasharray="1.500 1"/><g fill="#f0281c"><circle cx="4" cy="6" r=".9"/><circle cx="4" cy="9.500" r=".9"/><circle cx="9" cy="6.500" r=".9"/><circle cx="9" cy="10" r=".9"/><circle cx="13" cy="5" r=".9"/><circle cx="13" cy="9" r=".9"/></g><path d="M6 8l5 3.800l-2 .2l1 2.100l-1 .5l-1-2.100l-1.500 1.300z" fill="#777"/></svg>
<svg class="a" style="left:630.8px;top:239.8px" width="12.48" height="12.48" viewBox="0 0 16 16"><path d="M2 2l4 3l5-3.500M2 2v9l4 2.500v-8.500M6 13.500l5-3" fill="none" stroke="#3a5a2a" stroke-width=".9"/><path d="M2.500 6l3 2v4l-3-1.800z" fill="#8ed86c"/><path d="M7 7.500l6 4.500l-2.500.3l1.300 2.600l-1.200.6l-1.300-2.600l-1.800 1.600z" fill="#555" stroke="#fff" stroke-width=".4"/></svg>
<svg class="a" style="left:654.8px;top:239.8px" width="12.48" height="12.48" viewBox="0 0 16 16"><path d="M2 2l4 3l5-3.500M2 2v9l4 2.500v-8.500M6 13.500l5-3" fill="none" stroke="#3a5a2a" stroke-width=".9"/><g fill="#f0281c"><circle cx="4" cy="6.500" r=".9"/><circle cx="4" cy="10" r=".9"/><circle cx="8.500" cy="6" r=".9"/><circle cx="9" cy="9.500" r=".9"/></g><path d="M7 7.500l6 4.500l-2.500.3l1.300 2.600l-1.200.6l-1.300-2.600l-1.800 1.600z" fill="#555" stroke="#fff" stroke-width=".4"/></svg>
<svg class="a" style="left:679.3px;top:239.8px" width="12.48" height="12.48" viewBox="0 0 16 16"><g opacity=".5"><rect x="2" y="2" width="11" height="11" fill="none" stroke="#555" stroke-width="1" stroke-dasharray="1.200 1.200"/><rect x="4.500" y="4.500" width="6" height="5" fill="#b8dca8" stroke="#5a8a4a" stroke-width=".6"/><circle cx="10" cy="10" r="2.200" fill="#e8f4e0" stroke="#5a8a4a" stroke-width=".8"/><path d="M11.500 11.500l2.500 2.500" stroke="#5a8a4a" stroke-width="1.200"/></g></svg>
<span class="t" style="left:721px;top:236.0px;font-size:14px;line-height:18px;color:#111;font-weight:bold">»</span>
<span class="t" style="left:733px;top:236.0px;font-size:15px;line-height:20px;color:#4a4a4a;font-weight:bold;letter-spacing:0.006px;"><u>RenderView1</u></span>
<div style="left:840px;top:238px;width:16px;height:17px;border:1px solid #cbc7c0;border-radius:4px;background:#f7f6f5"></div>
<svg class="a" style="left:842.0px;top:239.5px" width="12" height="12" viewBox="0 0 12 12"><rect x="1.500" y="2" width="9" height="8" fill="#fff" stroke="#222" stroke-width="1.200"/><rect x="2" y="2.500" width="4" height="7" fill="#c4d0f0"/><path d="M6 2v8" stroke="#222" stroke-width="1.200"/></svg>
<div style="left:859px;top:238px;width:16px;height:17px;border:1px solid #cbc7c0;border-radius:4px;background:#f7f6f5"></div>
<svg class="a" style="left:861.0px;top:239.5px" width="12" height="12" viewBox="0 0 12 12"><rect x="1.500" y="2" width="9" height="8" fill="#fff" stroke="#222" stroke-width="1.200"/><rect x="2" y="2.500" width="8" height="3.500" fill="#c4d0f0"/><path d="M1.500 6h9" stroke="#222" stroke-width="1.200"/></svg>
<div style="left:878px;top:238px;width:16px;height:17px;border:1px solid #cbc7c0;border-radius:4px;background:#f7f6f5"></div>
<svg class="a" style="left:880.0px;top:239.5px" width="12" height="12" viewBox="0 0 12 12"><rect x="1.500" y="2" width="9" height="8" fill="#fff" stroke="#222" stroke-width="1.200"/><path d="M1.500 2.800h9" stroke="#222" stroke-width="1.600"/></svg>
<div style="left:897px;top:238px;width:16px;height:17px;border:1px solid #cbc7c0;border-radius:4px;background:#f7f6f5"></div>
<svg class="a" style="left:899.0px;top:239.5px" width="12" height="12" viewBox="0 0 12 12"><rect x="1.500" y="1.500" width="9" height="9" rx="1.500" fill="none" stroke="#8a8882" stroke-width="1"/><rect x="5" y="3.500" width="4" height="3.500" fill="#f7f6f5" stroke="#8a8882" stroke-width=".9"/><rect x="3" y="5.500" width="4" height="3.500" fill="#f7f6f5" stroke="#8a8882" stroke-width=".9"/></svg>
<div style="left:916px;top:238px;width:16px;height:17px;border:1px solid #cbc7c0;border-radius:4px;background:#f7f6f5"></div>
<svg class="a" style="left:918.0px;top:239.5px" width="12" height="12" viewBox="0 0 12 12"><rect x="1.500" y="1.500" width="9" height="9" rx="1.500" fill="none" stroke="#8a8882" stroke-width="1"/><path d="M3.800 3.800l4.400 4.400M8.200 3.800l-4.400 4.400" stroke="#77756f" stroke-width="1.500"/></svg>
<div style="left:328px;top:259px;width:605px;height:762px;border:2px solid #0000fb;background:#fff"></div>
<div id="rv" style="left:331px;top:262px;width:599px;height:756px;background:#52576e;overflow:hidden">
<svg class="a" style="left:0;top:0" width="599" height="756" viewBox="331 262 599 756">
<defs>
<linearGradient id="gtop" gradientUnits="userSpaceOnUse" x1="331" y1="660" x2="620" y2="520"><stop offset="0" stop-color="#8c3e2d"/><stop offset=".5" stop-color="#7c2a26"/><stop offset=".85" stop-color="#64181d"/><stop offset="1" stop-color="#4c0c14"/></linearGradient>
<linearGradient id="gside" gradientUnits="userSpaceOnUse" x1="331" y1="740" x2="600" y2="610"><stop offset="0" stop-color="#56241f"/><stop offset=".6" stop-color="#4a151a"/><stop offset="1" stop-color="#420812"/></linearGradient>
<linearGradient id="gbar" x1="0" y1="0" x2="0" y2="1"><stop offset="0" stop-color="#b40426"/><stop offset="0.03125" stop-color="#c0282f"/><stop offset="0.0625" stop-color="#cb3e38"/><stop offset="0.09375" stop-color="#d55042"/><stop offset="0.125" stop-color="#de604d"/><stop offset="0.1562" stop-color="#e57058"/><stop offset="0.1875" stop-color="#ec7f63"/><stop offset="0.2188" stop-color="#f18d6f"/><stop offset="0.25" stop-color="#f49a7b"/><stop offset="0.2812" stop-color="#f7a687"/><stop offset="0.3125" stop-color="#f7b194"/><stop offset="0.3438" stop-color="#f7bba0"/><stop offset="0.375" stop-color="#f5c4ad"/><stop offset="0.4062" stop-color="#f1ccb9"/><stop offset="0.4375" stop-color="#ecd3c5"/><stop offset="0.4688" stop-color="#e5d8d1"/><stop offset="0.5" stop-color="#dddddd"/><stop offset="0.5312" stop-color="#d5dbe6"/><stop offset="0.5625" stop-color="#ccd9ee"/><stop offset="0.5938" stop-color="#c2d5f4"/><stop offset="0.625" stop-color="#b8d0f9"/><stop offset="0.6562" stop-color="#aec9fd"/><stop offset="0.6875" stop-color="#a3c2ff"/><stop offset="0.7188" stop-color="#98b9ff"/><stop offset="0.75" stop-color="#8db0fe"/><stop offset="0.7812" stop-color="#82a5fb"/><stop offset="0.8125" stop-color="#779af7"/><stop offset="0.8438" stop-color="#6c8ef1"/><stop offset="0.875" stop-color="#6282ea"/><stop offset="0.9062" stop-color="#5775e1"/><stop offset="0.9375" stop-color="#4d68d7"/><stop offset="0.9688" stop-color="#445acc"/><stop offset="1" stop-color="#3b4cc0"/></linearGradient>
</defs>
<polygon points="625.5,511 541.5,578 325,676.1 325,647.9" fill="url(#gtop)" stroke="#d83a36" stroke-width="1"/>
<polygon points="541.5,578 610.5,677 325,808.1 325,676.1" fill="url(#gside)" stroke="#d0322f" stroke-width="1"/>
<polygon points="625.5,511 695.7,611 610.5,677 541.5,578" fill="#960a20" stroke="#a5131f" stroke-width="1"/>
<g fill="#ff00d8">
<rect x="665" y="568" width="5" height="5"/><rect x="665" y="577" width="5" height="5"/><rect x="672" y="578" width="5" height="5"/><rect x="663" y="585" width="5" height="5"/><rect x="670" y="585" width="5" height="5"/><rect x="679" y="588" width="5" height="5"/><rect x="668" y="593" width="5" height="5"/><rect x="674" y="593" width="5" height="5"/><rect x="665" y="601" width="5" height="5"/><rect x="673" y="600" width="5" height="5"/><rect x="680" y="599" width="5" height="5"/><rect x="686" y="598" width="5" height="5"/><rect x="671" y="608" width="5" height="5"/><rect x="678" y="607" width="5" height="5"/><rect x="685" y="606" width="5" height="5"/><rect x="676" y="614" width="5" height="5"/><rect x="685" y="615" width="5" height="5"/>
</g>
<rect x="839" y="681" width="17" height="295" fill="url(#gbar)"/>
<g stroke="#d6d6de" stroke-width=".9">
<line x1="854.5" y1="680.4" x2="863" y2="680.4"/><line x1="854.5" y1="687.8" x2="863" y2="687.8"/><line x1="854.5" y1="695.2" x2="863" y2="695.2"/><line x1="854.5" y1="702.6" x2="863" y2="702.6"/><line x1="854.5" y1="710.0" x2="863" y2="710.0"/><line x1="854.5" y1="717.4" x2="863" y2="717.4"/><line x1="854.5" y1="724.8" x2="863" y2="724.8"/><line x1="854.5" y1="732.2" x2="863" y2="732.2"/><line x1="854.5" y1="739.6" x2="863" y2="739.6"/><line x1="854.5" y1="747.0" x2="863" y2="747.0"/><line x1="849.5" y1="754.4" x2="863" y2="754.4"/><line x1="854.5" y1="761.8" x2="863" y2="761.8"/><line x1="854.5" y1="769.2" x2="863" y2="769.2"/><line x1="854.5" y1="776.6" x2="863" y2="776.6"/><line x1="854.5" y1="784.0" x2="863" y2="784.0"/><line x1="854.5" y1="791.4" x2="863" y2="791.4"/><line x1="854.5" y1="798.8" x2="863" y2="798.8"/><line x1="854.5" y1="806.2" x2="863" y2="806.2"/><line x1="854.5" y1="813.6" x2="863" y2="813.6"/><line x1="854.5" y1="821.0" x2="863" y2="821.0"/><line x1="849.5" y1="828.4" x2="863" y2="828.4"/><line x1="854.5" y1="835.8" x2="863" y2="835.8"/><line x1="854.5" y1="843.2" x2="863" y2="843.2"/><line x1="854.5" y1="850.6" x2="863" y2="850.6"/><line x1="854.5" y1="858.0" x2="863" y2="858.0"/><line x1="854.5" y1="865.4" x2="863" y2="865.4"/><line x1="854.5" y1="872.8" x2="863" y2="872.8"/><line x1="854.5" y1="880.2" x2="863" y2="880.2"/><line x1="854.5" y1="887.6" x2="863" y2="887.6"/><line x1="854.5" y1="895.0" x2="863" y2="895.0"/><line x1="849.5" y1="902.4" x2="863" y2="902.4"/><line x1="854.5" y1="909.8" x2="863" y2="909.8"/><line x1="854.5" y1="917.2" x2="863" y2="917.2"/><line x1="854.5" y1="924.6" x2="863" y2="924.6"/><line x1="854.5" y1="932.0" x2="863" y2="932.0"/><line x1="854.5" y1="939.4" x2="863" y2="939.4"/><line x1="854.5" y1="946.8" x2="863" y2="946.8"/><line x1="854.5" y1="954.2" x2="863" y2="954.2"/><line x1="854.5" y1="961.6" x2="863" y2="961.6"/><line x1="854.5" y1="969.0" x2="863" y2="969.0"/>
</g>
<line x1="425.5" y1="922" x2="399" y2="883" stroke="#e01010" stroke-width="1.2"/>
<polygon points="396,879 406,884.5 400,889" fill="#d40f0f"/>
<line x1="425.5" y1="922" x2="449" y2="911" stroke="#12c812" stroke-width="1.2"/>
<polygon points="458,907.5 447.5,905.5 450.5,915.5" fill="#14c414"/>
<line x1="425.5" y1="922" x2="399" y2="945" stroke="#e8e800" stroke-width="1.2"/>
<polygon points="389,951 401,950 396,940" fill="#e6e600"/>
</svg>
<span class="t" style="left:450px;top:392.5px;font-size:12.5px;line-height:16px;color:#fff;letter-spacing:-0.218px;">reslin__DEPL Magnitude</span>
<span class="t" style="left:534px;top:409.5px;font-size:12.5px;line-height:16px;color:#fff;letter-spacing:0.063px;">8.287e+03</span>
<span class="t" style="left:534px;top:483.5px;font-size:12.5px;line-height:16px;color:#fff;letter-spacing:-0.205px;">6215.4</span>
<span class="t" style="left:534px;top:557.5px;font-size:12.5px;line-height:16px;color:#fff;letter-spacing:-0.205px;">4143.6</span>
<span class="t" style="left:534px;top:630.5px;font-size:12.5px;line-height:16px;color:#fff;letter-spacing:-0.205px;">2071.8</span>
<span class="t" style="left:534px;top:704.5px;font-size:12.5px;line-height:16px;color:#fff;letter-spacing:0.078px;">1.534e-19</span>
<span class="t" style="left:72.5px;top:612.0px;font-size:15px;line-height:20px;color:#fff;">X</span>
<span class="t" style="left:122.5px;top:633.5px;font-size:15px;line-height:20px;color:#fff;">Z</span>
<span class="t" style="left:68.5px;top:669.0px;font-size:15px;line-height:20px;color:#fff;">Y</span>
</div>
<div style="left:937px;top:256px;width:979px;height:766px;background:#f7f7f6"></div>
<span class="t" style="left:1681px;top:235.0px;font-size:15px;line-height:20px;color:#4a4a4a;letter-spacing:-0.009px;">SpreadSheetView1</span>
<div style="left:1821px;top:236px;width:16px;height:17px;border:1px solid #cbc7c0;border-radius:4px;background:#f7f6f5"></div>
<svg class="a" style="left:1823.0px;top:238.0px" width="12" height="12" viewBox="0 0 12 12"><rect x="1.500" y="2" width="9" height="8" fill="#fff" stroke="#222" stroke-width="1.200"/><rect x="2" y="2.500" width="4" height="7" fill="#c4d0f0"/><path d="M6 2v8" stroke="#222" stroke-width="1.200"/></svg>
<div style="left:1840px;top:236px;width:16px;height:17px;border:1px solid #cbc7c0;border-radius:4px;background:#f7f6f5"></div>
<svg class="a" style="left:1842.0px;top:238.0px" width="12" height="12" viewBox="0 0 12 12"><rect x="1.500" y="2" width="9" height="8" fill="#fff" stroke="#222" stroke-width="1.200"/><rect x="2" y="2.500" width="8" height="3.500" fill="#c4d0f0"/><path d="M1.500 6h9" stroke="#222" stroke-width="1.200"/></svg>
<div style="left:1859px;top:236px;width:16px;height:17px;border:1px solid #cbc7c0;border-radius:4px;background:#f7f6f5"></div>
<svg class="a" style="left:1861.0px;top:238.0px" width="12" height="12" viewBox="0 0 12 12"><rect x="1.500" y="2" width="9" height="8" fill="#fff" stroke="#222" stroke-width="1.200"/><path d="M1.500 2.800h9" stroke="#222" stroke-width="1.600"/></svg>
<div style="left:1878px;top:236px;width:16px;height:17px;border:1px solid #cbc7c0;border-radius:4px;background:#f7f6f5"></div>
<svg class="a" style="left:1880.0px;top:238.0px" width="12" height="12" viewBox="0 0 12 12"><rect x="1.500" y="1.500" width="9" height="9" rx="1.500" fill="none" stroke="#8a8882" stroke-width="1"/><rect x="5" y="3.500" width="4" height="3.500" fill="#f7f6f5" stroke="#8a8882" stroke-width=".9"/><rect x="3" y="5.500" width="4" height="3.500" fill="#f7f6f5" stroke="#8a8882" stroke-width=".9"/></svg>
<div style="left:1897.5px;top:236px;width:16px;height:17px;border:1px solid #cbc7c0;border-radius:4px;background:#f7f6f5"></div>
<svg class="a" style="left:1899.5px;top:238.0px" width="12" height="12" viewBox="0 0 12 12"><rect x="1.500" y="1.500" width="9" height="9" rx="1.500" fill="none" stroke="#8a8882" stroke-width="1"/><path d="M3.800 3.800l4.400 4.400M8.200 3.800l-4.400 4.400" stroke="#77756f" stroke-width="1.500"/></svg>
<span class="t" style="left:939px;top:262.0px;font-size:15px;line-height:20px;color:#4a4a4a;font-weight:bold;letter-spacing:-0.498px;">Showing</span>
<div class="combo" style="left:1005px;top:260px;width:323px;height:24px;"></div>
<span class="t" style="left:1010px;top:262.0px;font-size:15px;line-height:20px;color:#4a4a4a;letter-spacing:0.104px;">WarpByVector1</span>
<svg class="a" style="left:1313.0px;top:264.0px" width="10" height="16" viewBox="0 0 10 16"><path d="M5 2.200L7.700 5.800H2.300z" fill="#67655f"/><path d="M5 13.800L7.700 10.200H2.300z" fill="#67655f"/></svg>
<span class="t" style="left:1331px;top:262.0px;font-size:15px;line-height:20px;color:#4a4a4a;font-weight:bold;letter-spacing:0.351px;">Attribute:</span>
<div class="combo" style="left:1405px;top:260px;width:97px;height:24px;"></div>
<span class="t" style="left:1410px;top:262.0px;font-size:15px;line-height:20px;color:#4a4a4a;letter-spacing:0.096px;">Point Data</span>
<svg class="a" style="left:1488.0px;top:264.0px" width="10" height="16" viewBox="0 0 10 16"><path d="M5 2.200L7.700 5.800H2.300z" fill="#67655f"/><path d="M5 13.800L7.700 10.200H2.300z" fill="#67655f"/></svg>
<span class="t" style="left:1505px;top:262.0px;font-size:15px;line-height:20px;color:#4a4a4a;font-weight:bold;letter-spacing:-0.252px;">Precision:</span>
<div style="left:1577px;top:260px;width:46px;height:24px;border:1px solid #b9b4ab;border-radius:4px;background:#fff"></div>
<div style="left:1607px;top:261px;width:15px;height:22px;background:linear-gradient(#fdfdfc,#e8e6e3);border-left:1px solid #d0cdc7;border-radius:0 3px 3px 0"></div>
<span class="t" style="left:1590px;top:262.0px;font-size:15px;line-height:20px;color:#4a4a4a;">6</span>
<svg class="a" style="left:1610.0px;top:263.5px" width="8" height="5" viewBox="0 0 8 5"><path d="M4 .5l3 4h-6z" fill="#55534e"/></svg>
<svg class="a" style="left:1610.0px;top:275.5px" width="8" height="5" viewBox="0 0 8 5"><path d="M4 4.500l3-4h-6z" fill="#55534e"/></svg>
<div class="btn" style="left:1626px;top:261px;width:20px;height:22px;"></div>
<svg class="a" style="left:1628.0px;top:264.0px" width="16" height="16" viewBox="0 0 16 16"><rect x="2" y="2" width="10.500" height="10.500" fill="#d8eec8" stroke="#4a6a2a" stroke-width="1.100" stroke-dasharray="1.500 1.200"/><path d="M8 7.500l6 4.500l-2.500.3l1.300 2.600l-1.200.6l-1.300-2.600l-1.800 1.600z" fill="#555" stroke="#222" stroke-width=".4"/></svg>
<div class="btn" style="left:1649px;top:261px;width:20px;height:22px;"></div>
<svg class="a" style="left:1651.0px;top:264.0px" width="16" height="16" viewBox="0 0 16 16"><rect x="2" y="2" width="12" height="12" fill="#fbf2a8" stroke="#c8a010" stroke-width="1.200"/><path d="M6 2v12M10 2v12M2 6h12M2 10h12" stroke="#c8a010" stroke-width="1"/></svg>
<div class="btn" style="left:1672px;top:261px;width:20px;height:22px;"></div>
<svg class="a" style="left:1673.0px;top:264.0px" width="18" height="16" viewBox="0 0 18 16"><path d="M5.500 2q-2 0-2 2v2.500q0 1.500-1.500 1.500q1.500 0 1.500 1.500v2.500q0 2 2 2M12.500 2q2 0 2 2v2.500q0 1.500 1.500 1.500q-1.500 0-1.500 1.500v2.500q0 2-2 2" fill="none" stroke="#7a8a5a" stroke-width="1.300"/><circle cx="6.500" cy="11.500" r=".8" fill="#3a6ad0"/><circle cx="9" cy="11.500" r=".8" fill="#3a6ad0"/><circle cx="11.500" cy="11.500" r=".8" fill="#3a6ad0"/></svg>
<div class="btn" style="left:1695px;top:261px;width:20px;height:22px;"></div>
<svg class="a" style="left:1696.0px;top:263.0px" width="18" height="18" viewBox="0 0 18 18"><rect x="2" y="5.500" width="12" height="10.500" fill="#e8dca0" stroke="#8a7a3a" stroke-width="1"/><path d="M4 9h8M4 11.500h8M4 14h8M7 7v9M10.500 7v9" stroke="#a89a5a" stroke-width=".7"/><path d="M7 1.500h4v3h2.500l-4.500 4l-4.500-4h2.500z" fill="#6cc04a" stroke="#3f8a26" stroke-width=".8"/><rect x="11.500" y="10" width="5" height="6" fill="#c9c9c4" stroke="#777" stroke-width=".7"/></svg>
<div style="left:939px;top:287px;width:973px;height:717px;background:#fff;border:1px solid #c2beb6"></div>
<div style="left:940px;top:288px;width:971px;height:21px;background:linear-gradient(#fbfbfa,#eceae7);border-bottom:1px solid #bfbbb3"></div>
<div style="left:940px;top:308px;width:21px;height:510px;background:linear-gradient(90deg,#f6f5f4,#eceae7)"></div>
<div style="left:940px;top:818px;width:21px;height:185px;background:#f2f1f0"></div>
<div id="tbl" style="left:940px;top:288px;width:971px;height:715px;overflow:hidden;font-size:12px;color:#4a4a4a">
<div style="left:0;top:49.5px;width:971px;height:1px;background:#c6c3bd"></div>
<span class="t" style="left:4.5px;top:29.0px;line-height:16px;">0</span>
<span class="t" style="left:26.0px;top:27.7px;line-height:16px;">1</span>
<span class="t" style="left:115.0px;top:27.7px;line-height:16px;">0</span>
<span class="t" style="left:169.5px;top:27.7px;line-height:16px;">0.013356</span>
<span class="t" style="left:248.8px;top:27.7px;line-height:16px;">47.9962</span>
<span class="t" style="left:328.1px;top:27.7px;line-height:16px;">600.6</span>
<span class="t" style="left:407.5px;top:27.7px;line-height:16px;">2.28828</span>
<span class="t" style="left:486.7px;top:27.7px;line-height:16px;">8223.16</span>
<span class="t" style="left:565.9px;top:27.7px;line-height:16px;">102.855</span>
<span class="t" style="left:645.0px;top:27.7px;line-height:16px;">1.0628e-05</span>
<span class="t" style="left:724.2px;top:27.7px;line-height:16px;">-0.000463369</span>
<span class="t" style="left:803.4px;top:27.7px;line-height:16px;">0.000483674</span>
<span class="t" style="left:882.6px;top:27.7px;line-height:16px;">-8.94052e-05</span>
<span class="t" style="left:960.3px;top:27.7px;line-height:16px;">-1</span>
<div style="left:21.5px;top:50px;width:950px;height:30px;background:#efefef"></div>
<div style="left:0;top:79.5px;width:971px;height:1px;background:#c6c3bd"></div>
<span class="t" style="left:4.5px;top:59.0px;line-height:16px;">1</span>
<span class="t" style="left:26.0px;top:57.7px;line-height:16px;">1</span>
<span class="t" style="left:115.0px;top:57.7px;line-height:16px;">1</span>
<span class="t" style="left:169.5px;top:57.7px;line-height:16px;">-2.45537e-22</span>
<span class="t" style="left:248.8px;top:57.7px;line-height:16px;">-5.42663e-21</span>
<span class="t" style="left:328.1px;top:57.7px;line-height:16px;">1.36056e-20</span>
<span class="t" style="left:407.5px;top:57.7px;line-height:16px;">-4.20677e-20</span>
<span class="t" style="left:486.7px;top:57.7px;line-height:16px;">-9.29741e-19</span>
<span class="t" style="left:565.9px;top:57.7px;line-height:16px;">2.33103e-18</span>
<span class="t" style="left:645.0px;top:57.7px;line-height:16px;">-0.0184404</span>
<span class="t" style="left:724.2px;top:57.7px;line-height:16px;">-0.0428617</span>
<span class="t" style="left:803.4px;top:57.7px;line-height:16px;">0.322053</span>
<span class="t" style="left:882.6px;top:57.7px;line-height:16px;">0.00155867</span>
<span class="t" style="left:960.3px;top:57.7px;line-height:16px;">0.</span>
<div style="left:0;top:109.5px;width:971px;height:1px;background:#c6c3bd"></div>
<span class="t" style="left:4.5px;top:89.0px;line-height:16px;">2</span>
<span class="t" style="left:26.0px;top:87.7px;line-height:16px;">1</span>
<span class="t" style="left:115.0px;top:87.7px;line-height:16px;">2</span>
<span class="t" style="left:169.5px;top:87.7px;line-height:16px;">0.0132805</span>
<span class="t" style="left:248.8px;top:87.7px;line-height:16px;">57.9962</span>
<span class="t" style="left:328.1px;top:87.7px;line-height:16px;">599.4</span>
<span class="t" style="left:407.5px;top:87.7px;line-height:16px;">2.27534</span>
<span class="t" style="left:486.7px;top:87.7px;line-height:16px;">8223.16</span>
<span class="t" style="left:565.9px;top:87.7px;line-height:16px;">-102.787</span>
<span class="t" style="left:645.0px;top:87.7px;line-height:16px;">2.01096e-05</span>
<span class="t" style="left:724.2px;top:87.7px;line-height:16px;">0.000480406</span>
<span class="t" style="left:803.4px;top:87.7px;line-height:16px;">-0.00047491</span>
<span class="t" style="left:882.6px;top:87.7px;line-height:16px;">-6.11777e-05</span>
<span class="t" style="left:960.3px;top:87.7px;line-height:16px;">4.</span>
<div style="left:21.5px;top:110px;width:950px;height:30px;background:#efefef"></div>
<div style="left:0;top:139.5px;width:971px;height:1px;background:#c6c3bd"></div>
<span class="t" style="left:4.5px;top:119.0px;line-height:16px;">3</span>
<span class="t" style="left:26.0px;top:117.7px;line-height:16px;">1</span>
<span class="t" style="left:115.0px;top:117.7px;line-height:16px;">3</span>
<span class="t" style="left:169.5px;top:117.7px;line-height:16px;">4.27093e-21</span>
<span class="t" style="left:248.8px;top:117.7px;line-height:16px;">10</span>
<span class="t" style="left:328.1px;top:117.7px;line-height:16px;">5.29984e-20</span>
<span class="t" style="left:407.5px;top:117.7px;line-height:16px;">7.31736e-19</span>
<span class="t" style="left:486.7px;top:117.7px;line-height:16px;">3.69005e-19</span>
<span class="t" style="left:565.9px;top:117.7px;line-height:16px;">9.08019e-18</span>
<span class="t" style="left:645.0px;top:117.7px;line-height:16px;">0.0173299</span>
<span class="t" style="left:724.2px;top:117.7px;line-height:16px;">0.0139233</span>
<span class="t" style="left:803.4px;top:117.7px;line-height:16px;">-0.310253</span>
<span class="t" style="left:882.6px;top:117.7px;line-height:16px;">-0.0157135</span>
<span class="t" style="left:960.3px;top:117.7px;line-height:16px;">-0</span>
<div style="left:0;top:169.5px;width:971px;height:1px;background:#c6c3bd"></div>
<span class="t" style="left:4.5px;top:149.0px;line-height:16px;">4</span>
<span class="t" style="left:26.0px;top:147.7px;line-height:16px;">1</span>
<span class="t" style="left:115.0px;top:147.7px;line-height:16px;">4</span>
<span class="t" style="left:169.5px;top:147.7px;line-height:16px;">10.0133</span>
<span class="t" style="left:248.8px;top:147.7px;line-height:16px;">47.9962</span>
<span class="t" style="left:328.1px;top:147.7px;line-height:16px;">600.6</span>
<span class="t" style="left:407.5px;top:147.7px;line-height:16px;">2.28711</span>
<span class="t" style="left:486.7px;top:147.7px;line-height:16px;">8223.17</span>
<span class="t" style="left:565.9px;top:147.7px;line-height:16px;">102.787</span>
<span class="t" style="left:645.0px;top:147.7px;line-height:16px;">-0.000110622</span>
<span class="t" style="left:724.2px;top:147.7px;line-height:16px;">-0.000396921</span>
<span class="t" style="left:803.4px;top:147.7px;line-height:16px;">0.000595943</span>
<span class="t" style="left:882.6px;top:147.7px;line-height:16px;">-5.81473e-06</span>
<span class="t" style="left:960.3px;top:147.7px;line-height:16px;">6.</span>
<div style="left:21.5px;top:170px;width:950px;height:30px;background:#efefef"></div>
<div style="left:0;top:199.5px;width:971px;height:1px;background:#c6c3bd"></div>
<span class="t" style="left:4.5px;top:179.0px;line-height:16px;">5</span>
<span class="t" style="left:26.0px;top:177.7px;line-height:16px;">1</span>
<span class="t" style="left:115.0px;top:177.7px;line-height:16px;">5</span>
<span class="t" style="left:169.5px;top:177.7px;line-height:16px;">10</span>
<span class="t" style="left:248.8px;top:177.7px;line-height:16px;">-8.12723e-21</span>
<span class="t" style="left:328.1px;top:177.7px;line-height:16px;">-9.17585e-21</span>
<span class="t" style="left:407.5px;top:177.7px;line-height:16px;">1.67692e-18</span>
<span class="t" style="left:486.7px;top:177.7px;line-height:16px;">-1.39243e-18</span>
<span class="t" style="left:565.9px;top:177.7px;line-height:16px;">-1.57209e-18</span>
<span class="t" style="left:645.0px;top:177.7px;line-height:16px;">-0.0296749</span>
<span class="t" style="left:724.2px;top:177.7px;line-height:16px;">-0.0462596</span>
<span class="t" style="left:803.4px;top:177.7px;line-height:16px;">0.311207</span>
<span class="t" style="left:882.6px;top:177.7px;line-height:16px;">-0.00519811</span>
<span class="t" style="left:960.3px;top:177.7px;line-height:16px;">-0</span>
<div style="left:0;top:229.5px;width:971px;height:1px;background:#c6c3bd"></div>
<span class="t" style="left:4.5px;top:209.0px;line-height:16px;">6</span>
<span class="t" style="left:26.0px;top:207.7px;line-height:16px;">1</span>
<span class="t" style="left:115.0px;top:207.7px;line-height:16px;">6</span>
<span class="t" style="left:169.5px;top:207.7px;line-height:16px;">10.0133</span>
<span class="t" style="left:248.8px;top:207.7px;line-height:16px;">57.9962</span>
<span class="t" style="left:328.1px;top:207.7px;line-height:16px;">599.4</span>
<span class="t" style="left:407.5px;top:207.7px;line-height:16px;">2.27659</span>
<span class="t" style="left:486.7px;top:207.7px;line-height:16px;">8223.17</span>
<span class="t" style="left:565.9px;top:207.7px;line-height:16px;">-102.855</span>
<span class="t" style="left:645.0px;top:207.7px;line-height:16px;">8.5424e-05</span>
<span class="t" style="left:724.2px;top:207.7px;line-height:16px;">0.000496846</span>
<span class="t" style="left:803.4px;top:207.7px;line-height:16px;">-0.000652502</span>
<span class="t" style="left:882.6px;top:207.7px;line-height:16px;">-1.58795e-05</span>
<span class="t" style="left:960.3px;top:207.7px;line-height:16px;">-1</span>
<div style="left:21.5px;top:230px;width:950px;height:30px;background:#efefef"></div>
<div style="left:0;top:259.5px;width:971px;height:1px;background:#c6c3bd"></div>
<span class="t" style="left:4.5px;top:239.0px;line-height:16px;">7</span>
<span class="t" style="left:26.0px;top:237.7px;line-height:16px;">1</span>
<span class="t" style="left:115.0px;top:237.7px;line-height:16px;">7</span>
<span class="t" style="left:169.5px;top:237.7px;line-height:16px;">10</span>
<span class="t" style="left:248.8px;top:237.7px;line-height:16px;">10</span>
<span class="t" style="left:328.1px;top:237.7px;line-height:16px;">1.66114e-20</span>
<span class="t" style="left:407.5px;top:237.7px;line-height:16px;">7.90614e-19</span>
<span class="t" style="left:486.7px;top:237.7px;line-height:16px;">2.2632e-18</span>
<span class="t" style="left:565.9px;top:237.7px;line-height:16px;">2.84603e-18</span>
<span class="t" style="left:645.0px;top:237.7px;line-height:16px;">0.038691</span>
<span class="t" style="left:724.2px;top:237.7px;line-height:16px;">0.0359858</span>
<span class="t" style="left:803.4px;top:237.7px;line-height:16px;">-0.304801</span>
<span class="t" style="left:882.6px;top:237.7px;line-height:16px;">-0.000226476</span>
<span class="t" style="left:960.3px;top:237.7px;line-height:16px;">0.</span>
<div style="left:0;top:289.5px;width:971px;height:1px;background:#c6c3bd"></div>
<span class="t" style="left:4.5px;top:269.0px;line-height:16px;">8</span>
<span class="t" style="left:26.0px;top:267.7px;line-height:16px;">1</span>
<span class="t" style="left:115.0px;top:267.7px;line-height:16px;">8</span>
<span class="t" style="left:169.5px;top:267.7px;line-height:16px;">0.0012591</span>
<span class="t" style="left:248.8px;top:267.7px;line-height:16px;">0.00090618</span>
<span class="t" style="left:328.1px;top:267.7px;line-height:16px;">1.00217</span>
<span class="t" style="left:407.5px;top:267.7px;line-height:16px;">0.215721</span>
<span class="t" style="left:486.7px;top:267.7px;line-height:16px;">0.155255</span>
<span class="t" style="left:565.9px;top:267.7px;line-height:16px;">0.372081</span>
<span class="t" style="left:645.0px;top:267.7px;line-height:16px;">-0.068889</span>
<span class="t" style="left:724.2px;top:267.7px;line-height:16px;">-0.110162</span>
<span class="t" style="left:803.4px;top:267.7px;line-height:16px;">0.337421</span>
<span class="t" style="left:882.6px;top:267.7px;line-height:16px;">-0.000614498</span>
<span class="t" style="left:960.3px;top:267.7px;line-height:16px;">0.</span>
<div style="left:21.5px;top:290px;width:950px;height:30px;background:#efefef"></div>
<div style="left:0;top:319.5px;width:971px;height:1px;background:#c6c3bd"></div>
<span class="t" style="left:4.5px;top:299.0px;line-height:16px;">9</span>
<span class="t" style="left:26.0px;top:297.7px;line-height:16px;">1</span>
<span class="t" style="left:115.0px;top:297.7px;line-height:16px;">9</span>
<span class="t" style="left:169.5px;top:297.7px;line-height:16px;">0.0019789</span>
<span class="t" style="left:248.8px;top:297.7px;line-height:16px;">0.00132185</span>
<span class="t" style="left:328.1px;top:297.7px;line-height:16px;">2.00407</span>
<span class="t" style="left:407.5px;top:297.7px;line-height:16px;">0.339044</span>
<span class="t" style="left:486.7px;top:297.7px;line-height:16px;">0.226472</span>
<span class="t" style="left:565.9px;top:297.7px;line-height:16px;">0.696708</span>
<span class="t" style="left:645.0px;top:297.7px;line-height:16px;">-0.0856758</span>
<span class="t" style="left:724.2px;top:297.7px;line-height:16px;">-0.103611</span>
<span class="t" style="left:803.4px;top:297.7px;line-height:16px;">0.313718</span>
<span class="t" style="left:882.6px;top:297.7px;line-height:16px;">0.00371225</span>
<span class="t" style="left:960.3px;top:297.7px;line-height:16px;">0.</span>
<div style="left:0;top:349.5px;width:971px;height:1px;background:#c6c3bd"></div>
<span class="t" style="left:4.5px;top:329.0px;line-height:16px;">10</span>
<span class="t" style="left:26.0px;top:327.7px;line-height:16px;">1</span>
<span class="t" style="left:115.0px;top:327.7px;line-height:16px;">10</span>
<span class="t" style="left:169.5px;top:327.7px;line-height:16px;">0.00238906</span>
<span class="t" style="left:248.8px;top:327.7px;line-height:16px;">0.00216574</span>
<span class="t" style="left:328.1px;top:327.7px;line-height:16px;">3.00596</span>
<span class="t" style="left:407.5px;top:327.7px;line-height:16px;">0.409317</span>
<span class="t" style="left:486.7px;top:327.7px;line-height:16px;">0.371055</span>
<span class="t" style="left:565.9px;top:327.7px;line-height:16px;">1.02151</span>
<span class="t" style="left:645.0px;top:327.7px;line-height:16px;">-0.0854079</span>
<span class="t" style="left:724.2px;top:327.7px;line-height:16px;">-0.0993534</span>
<span class="t" style="left:803.4px;top:327.7px;line-height:16px;">0.307374</span>
<span class="t" style="left:882.6px;top:327.7px;line-height:16px;">-0.000885232</span>
<span class="t" style="left:960.3px;top:327.7px;line-height:16px;">0.</span>
<div style="left:21.5px;top:350px;width:950px;height:30px;background:#efefef"></div>
<div style="left:0;top:379.5px;width:971px;height:1px;background:#c6c3bd"></div>
<span class="t" style="left:4.5px;top:359.0px;line-height:16px;">11</span>
<span class="t" style="left:26.0px;top:357.7px;line-height:16px;">1</span>
<span class="t" style="left:115.0px;top:357.7px;line-height:16px;">11</span>
<span class="t" style="left:169.5px;top:357.7px;line-height:16px;">0.00263144</span>
<span class="t" style="left:248.8px;top:357.7px;line-height:16px;">0.0034274</span>
<span class="t" style="left:328.1px;top:357.7px;line-height:16px;">4.00786</span>
<span class="t" style="left:407.5px;top:357.7px;line-height:16px;">0.450843</span>
<span class="t" style="left:486.7px;top:357.7px;line-height:16px;">0.587214</span>
<span class="t" style="left:565.9px;top:357.7px;line-height:16px;">1.34589</span>
<span class="t" style="left:645.0px;top:357.7px;line-height:16px;">-0.0895653</span>
<span class="t" style="left:724.2px;top:357.7px;line-height:16px;">-0.0997041</span>
<span class="t" style="left:803.4px;top:357.7px;line-height:16px;">0.317228</span>
<span class="t" style="left:882.6px;top:357.7px;line-height:16px;">-0.00155277</span>
<span class="t" style="left:960.3px;top:357.7px;line-height:16px;">0.</span>
<div style="left:0;top:409.5px;width:971px;height:1px;background:#c6c3bd"></div>
<span class="t" style="left:4.5px;top:389.0px;line-height:16px;">12</span>
<span class="t" style="left:26.0px;top:387.7px;line-height:16px;">1</span>
<span class="t" style="left:115.0px;top:387.7px;line-height:16px;">12</span>
<span class="t" style="left:169.5px;top:387.7px;line-height:16px;">0.00268849</span>
<span class="t" style="left:248.8px;top:387.7px;line-height:16px;">0.00507138</span>
<span class="t" style="left:328.1px;top:387.7px;line-height:16px;">5.00973</span>
<span class="t" style="left:407.5px;top:387.7px;line-height:16px;">0.460618</span>
<span class="t" style="left:486.7px;top:387.7px;line-height:16px;">0.868877</span>
<span class="t" style="left:565.9px;top:387.7px;line-height:16px;">1.66758</span>
<span class="t" style="left:645.0px;top:387.7px;line-height:16px;">-0.0872975</span>
<span class="t" style="left:724.2px;top:387.7px;line-height:16px;">-0.0941061</span>
<span class="t" style="left:803.4px;top:387.7px;line-height:16px;">0.309161</span>
<span class="t" style="left:882.6px;top:387.7px;line-height:16px;">-0.00160123</span>
<span class="t" style="left:960.3px;top:387.7px;line-height:16px;">0.</span>
<div style="left:21.5px;top:410px;width:950px;height:30px;background:#efefef"></div>
<div style="left:0;top:439.5px;width:971px;height:1px;background:#c6c3bd"></div>
<span class="t" style="left:4.5px;top:419.0px;line-height:16px;">13</span>
<span class="t" style="left:26.0px;top:417.7px;line-height:16px;">1</span>
<span class="t" style="left:115.0px;top:417.7px;line-height:16px;">13</span>
<span class="t" style="left:169.5px;top:417.7px;line-height:16px;">0.00274056</span>
<span class="t" style="left:248.8px;top:417.7px;line-height:16px;">0.00722387</span>
<span class="t" style="left:328.1px;top:417.7px;line-height:16px;">6.0117</span>
<span class="t" style="left:407.5px;top:417.7px;line-height:16px;">0.469539</span>
<span class="t" style="left:486.7px;top:417.7px;line-height:16px;">1.23766</span>
<span class="t" style="left:565.9px;top:417.7px;line-height:16px;">2.00503</span>
<span class="t" style="left:645.0px;top:417.7px;line-height:16px;">-0.0932938</span>
<span class="t" style="left:724.2px;top:417.7px;line-height:16px;">-0.0973332</span>
<span class="t" style="left:803.4px;top:417.7px;line-height:16px;">0.320484</span>
<span class="t" style="left:882.6px;top:417.7px;line-height:16px;">-0.00394262</span>
<span class="t" style="left:960.3px;top:417.7px;line-height:16px;">0.</span>
<div style="left:0;top:469.5px;width:971px;height:1px;background:#c6c3bd"></div>
<span class="t" style="left:4.5px;top:449.0px;line-height:16px;">14</span>
<span class="t" style="left:26.0px;top:447.7px;line-height:16px;">1</span>
<span class="t" style="left:115.0px;top:447.7px;line-height:16px;">14</span>
<span class="t" style="left:169.5px;top:447.7px;line-height:16px;">0.00275231</span>
<span class="t" style="left:248.8px;top:447.7px;line-height:16px;">0.00975561</span>
<span class="t" style="left:328.1px;top:447.7px;line-height:16px;">7.01363</span>
<span class="t" style="left:407.5px;top:447.7px;line-height:16px;">0.471551</span>
<span class="t" style="left:486.7px;top:447.7px;line-height:16px;">1.67142</span>
<span class="t" style="left:565.9px;top:447.7px;line-height:16px;">2.33546</span>
<span class="t" style="left:645.0px;top:447.7px;line-height:16px;">-0.0924744</span>
<span class="t" style="left:724.2px;top:447.7px;line-height:16px;">-0.103523</span>
<span class="t" style="left:803.4px;top:447.7px;line-height:16px;">0.327322</span>
<span class="t" style="left:882.6px;top:447.7px;line-height:16px;">-0.00120456</span>
<span class="t" style="left:960.3px;top:447.7px;line-height:16px;">0.</span>
<div style="left:21.5px;top:470px;width:950px;height:30px;background:#efefef"></div>
<div style="left:0;top:499.5px;width:971px;height:1px;background:#c6c3bd"></div>
<span class="t" style="left:4.5px;top:479.0px;line-height:16px;">15</span>
<span class="t" style="left:26.0px;top:477.7px;line-height:16px;">1</span>
<span class="t" style="left:115.0px;top:477.7px;line-height:16px;">15</span>
<span class="t" style="left:169.5px;top:477.7px;line-height:16px;">0.00281608</span>
<span class="t" style="left:248.8px;top:477.7px;line-height:16px;">0.0126792</span>
<span class="t" style="left:328.1px;top:477.7px;line-height:16px;">8.01558</span>
<span class="t" style="left:407.5px;top:477.7px;line-height:16px;">0.482477</span>
<span class="t" style="left:486.7px;top:477.7px;line-height:16px;">2.17232</span>
<span class="t" style="left:565.9px;top:477.7px;line-height:16px;">2.66965</span>
<span class="t" style="left:645.0px;top:477.7px;line-height:16px;">-0.0929177</span>
<span class="t" style="left:724.2px;top:477.7px;line-height:16px;">-0.097433</span>
<span class="t" style="left:803.4px;top:477.7px;line-height:16px;">0.3196</span>
<span class="t" style="left:882.6px;top:477.7px;line-height:16px;">-0.00356578</span>
<span class="t" style="left:960.3px;top:477.7px;line-height:16px;">-0</span>
<div style="left:0;top:529.5px;width:971px;height:1px;background:#c6c3bd"></div>
<span class="t" style="left:4.5px;top:509.0px;line-height:16px;">16</span>
<span class="t" style="left:26.0px;top:507.7px;line-height:16px;">1</span>
<span class="t" style="left:115.0px;top:507.7px;line-height:16px;">16</span>
<span class="t" style="left:169.5px;top:507.7px;line-height:16px;">0.0028255</span>
<span class="t" style="left:248.8px;top:507.7px;line-height:16px;">0.0159824</span>
<span class="t" style="left:328.1px;top:507.7px;line-height:16px;">9.01753</span>
<span class="t" style="left:407.5px;top:507.7px;line-height:16px;">0.484092</span>
<span class="t" style="left:486.7px;top:507.7px;line-height:16px;">2.73825</span>
<span class="t" style="left:565.9px;top:507.7px;line-height:16px;">3.00257</span>
<span class="t" style="left:645.0px;top:507.7px;line-height:16px;">-0.0932906</span>
<span class="t" style="left:724.2px;top:507.7px;line-height:16px;">-0.0945424</span>
<span class="t" style="left:803.4px;top:507.7px;line-height:16px;">0.317168</span>
<span class="t" style="left:882.6px;top:507.7px;line-height:16px;">-0.00248986</span>
<span class="t" style="left:960.3px;top:507.7px;line-height:16px;">0.</span>
<div style="left:21.5px;top:0;width:1px;height:530px;background:#c9c6c0"></div>
<div style="left:110.5px;top:0;width:1px;height:530px;background:#c9c6c0"></div>
<div style="left:165.5px;top:0;width:1px;height:530px;background:#c9c6c0"></div>
<div style="left:403.5px;top:0;width:1px;height:530px;background:#c9c6c0"></div>
<div style="left:641.0px;top:0;width:1px;height:530px;background:#c9c6c0"></div>
<span class="t" style="left:28.5px;top:2.7px;line-height:16px;letter-spacing:0.062px">Block Number</span>
<span class="t" style="left:117.0px;top:2.7px;line-height:16px;letter-spacing:0.014px">Point ID</span>
<span class="t" style="left:268.0px;top:2.7px;line-height:16px;letter-spacing:0.058px">Points</span>
<span class="t" style="left:487.6px;top:2.7px;line-height:16px;letter-spacing:-0.248px">reslin__DEPL</span>
<span class="t" style="left:821.7px;top:2.7px;line-height:16px;letter-spacing:-0.418px">unnamed_EPSI_NOEU</span>
</div>
<div class="sbt" style="left:941px;top:1005px;width:970px;height:13px;"></div>
<div class="sbh" style="left:952px;top:1005px;width:135px;height:13px;"></div>
<svg class="a" style="left:943.0px;top:1007.5px" width="6" height="8" viewBox="0 0 6 8"><path d="M5 1l-3.500 3l3.500 3z" fill="#c4c1bb"/></svg>
<svg class="a" style="left:1901.0px;top:1007.5px" width="6" height="8" viewBox="0 0 6 8"><path d="M1.200 1l4 3l-4 3z" fill="#55534e"/></svg>
<div style="left:933px;top:624px;width:3px;height:1px;background:#cfccc6"></div>
<div style="left:933px;top:627px;width:3px;height:1px;background:#cfccc6"></div>
<div style="left:933px;top:630px;width:3px;height:1px;background:#cfccc6"></div>
<div style="left:0px;top:1028px;width:1692px;height:27px;border:1px solid #cfccc6;border-right:1px solid #cfccc6;background:#f3f2f1;border-radius:2px"></div>
<svg class="a" style="left:1697.0px;top:1033.0px" width="16" height="16" viewBox="0 0 16 16"><rect x="1" y="1" width="14" height="14" rx="3" fill="#eceae7" stroke="#d0cdc7" stroke-width="1"/><path d="M5 5l6 6M11 5l-6 6" stroke="#b4b1ab" stroke-width="2.400"/></svg>
<div style="left:1714px;top:1030px;width:200px;height:23px;border:1px solid #d4d1cb;border-radius:10px;background:linear-gradient(#e9e8e5,#f1f0ee)"></div>
<div style="left:1716px;top:1035px;width:3px;height:13px;background:#87a556;border:1px solid #6f8c40;border-radius:1px"></div>
<div style="left:0px;top:1055px;width:1920px;height:25px;background:linear-gradient(#403f3b,#3a3935);border-top:1px solid #74736e"></div>
<svg class="a" style="left:0.0px;top:1059.0px" width="18" height="16" viewBox="0 0 18 16"><rect x=".5" y="1" width="17" height="14" rx="1" fill="#5a9a4a" stroke="#d8e8d0" stroke-width="1"/><rect x="1.500" y="2" width="15" height="3.500" fill="#e8f0e4"/><rect x="2.500" y="7" width="13" height="6.500" fill="#8cc878"/></svg>
<div style="left:22px;top:1063px;width:4px;height:1px;background:#55534e"></div>
<div style="left:22px;top:1066px;width:4px;height:1px;background:#55534e"></div>
<div style="left:22px;top:1069px;width:4px;height:1px;background:#55534e"></div>
<div style="left:30px;top:1056px;width:193px;height:24px;border:1px solid #2e2d2a;border-radius:4px;background:linear-gradient(#4a4944,#3e3d39)"></div>
<svg class="a" style="left:35.0px;top:1061.0px" width="16" height="14" viewBox="0 0 16 14"><rect x="0.5" y="0.5" width="15" height="13" rx="1.2" fill="#cfcdc7"/><rect x="1.8" y="2.2" width="12.4" height="9.8" fill="#1b1b1b"/><path d="M3.5 4.5l2.2 1.8l-2.2 1.800" stroke="#fff" stroke-width="1" fill="none"/><path d="M6.500 9h3" stroke="#fff" stroke-width="1"/></svg>
<span class="t" style="left:59px;top:1057.5px;font-size:15px;line-height:20px;color:#dfdbd2;letter-spacing:0.140px;">[souzou@kouzou-A7…</span>
<div style="left:224px;top:1056px;width:197px;height:24px;border:1px solid #262522;border-radius:4px;background:linear-gradient(#2f2e2b,#393835)"></div>
<svg class="a" style="left:231.0px;top:1061.0px" width="18" height="14" viewBox="0 0 18 14"><path d="M1 4.500h9l2-1.500h2l-1.500 2.500l-3 1v3.500h2.500v1.500h-7v-1.500h2.500v-3.500q-4 0-6.500-2z" fill="#e8a81c" stroke="#8a5a0a" stroke-width=".6"/><circle cx="16" cy="3" r="1" fill="#f6d86a"/></svg>
<span class="t" style="left:256px;top:1057.5px;font-size:15px;line-height:20px;color:#fff;letter-spacing:-0.366px;">SALOME 8.3.0 - [Study1]</span>
<div style="left:422px;top:1056px;width:197px;height:24px;border:1px solid #2e2d2a;border-radius:4px;background:linear-gradient(#4a4944,#3e3d39)"></div>
<svg class="a" style="left:426.0px;top:1058.0px" width="18" height="18" viewBox="0 0 18 18"><circle cx="9" cy="9" r="8" fill="url(#ffg)"/><circle cx="10" cy="7.5" r="5" fill="#2b62b8"/><path d="M5 5c2-1 3-1 4 1c-1 1-1 2 1 3c1 1 2 0 3 1c0 2-2 4-5 4c-3 0-5-3-4-6z" fill="#f08a1d"/></svg>
<span class="t" style="left:451px;top:1057.5px;font-size:15px;line-height:20px;color:#dfdbd2;letter-spacing:-0.470px;">[Salome-Meca2017 - …</span>
<div style="left:1735px;top:1075px;width:40px;height:2px;background:#ddd"></div>
<div style="left:1860px;top:1071px;width:60px;height:9px;background:#55534e"></div>
<div style="left:1695px;top:1052px;width:226px;height:28px;background:#0c0c0c;border-radius:7px 0 0 0;border:1px solid #2a2a2a"></div>
<span class="t" style="left:1700px;top:1056.5px;font-size:15px;line-height:20px;color:#f4f4f4;"><span style="letter-spacing:-1.4px">ゴミ箱に</span> 2<span style="letter-spacing:-1.6px">個のアイテムがあります</span></span>
<svg class="a" style="left:0;top:0;pointer-events:none" width="1920" height="1080" viewBox="0 0 1920 1080">
<g fill="none" stroke="#fb0006" stroke-linecap="round" stroke-linejoin="round">
<path d="M426.500 363.300 L709 363.300" stroke-width="6.600"/>
<path d="M652 317 L655.500 262" stroke-width="7"/>
<path d="M642.500 275.500 L656 259.500 L671 278" stroke-width="7"/>
<path d="M1113.500 238.300 L1586 238.300" stroke-width="6.600"/>
<path d="M1566 240 L1600 249 L1622 256.500" stroke-width="7"/>
<path d="M1611 241 L1626 258 L1606 268" stroke-width="7.500"/>
<path d="M1648 157.400 L1818 157.400" stroke-width="7"/>
<path d="M1745 163 L1816 224" stroke-width="8"/>
<path d="M1819.500 208 L1819 226.500 L1802 228.500" stroke-width="7.500"/>
</g></svg>
<svg class="a" style="left:427.8px;top:322.4px" width="206.4" height="44.2" viewBox="0 -34.0 206.4 44.2"><text x="1" y="0" font-family="Liberation Sans, sans-serif" font-size="34" fill="#0a0a0a" textLength="202" lengthAdjust="spacingAndGlyphs">Select Points</text></svg>
<svg class="a" style="left:644px;top:328px" width="70" height="34" viewBox="0 0 70 34"><circle cx="16" cy="15.800" r="13.100" fill="none" stroke="#0a0a0a" stroke-width="2.200"/><circle cx="50.200" cy="15.800" r="13.100" fill="none" stroke="#0a0a0a" stroke-width="2.200"/></svg>
<svg class="a" style="left:1112.3px;top:199.6px" width="472.8" height="44.2" viewBox="0 -34.0 472.8 44.2"><text x="1" y="0" font-family="Liberation Sans, sans-serif" font-size="34" fill="#0a0a0a" textLength="467" lengthAdjust="spacingAndGlyphs">Show only selected Elements.</text></svg>
<svg class="a" style="left:1647.5px;top:114.8px" width="103.6" height="44.5" viewBox="0 -34.2 103.6 44.5"><text x="0" y="0" font-family="Liberation Sans, Noto Sans CJK JP, sans-serif" font-size="34.5" fill="#0a0a0a" textLength="103" lengthAdjust="spacingAndGlyphs">右上の</text></svg>
<svg class="a" style="left:1759.5px;top:114.8px" width="62.2" height="44.5" viewBox="0 -34.2 62.2 44.5"><text x="0" y="0" font-family="Liberation Sans, Noto Sans CJK JP, sans-serif" font-size="30" fill="#0a0a0a" textLength="60" lengthAdjust="spacingAndGlyphs">ロロ</text></svg>
<svg class="a" style="left:1748px;top:125px" width="80" height="20" viewBox="0 0 80 20"><path d="M2.500 1.500h2.600l-.5 8.500h-1.600zM7.500 1.500h2.600l-.5 8.500h-1.600z" fill="#0a0a0a"/><path d="M72 12h1.400l-.3 5h-.8zM75 12h1.400l-.3 5h-.8z" fill="#0a0a0a"/></svg>
</div>
</body></html>
